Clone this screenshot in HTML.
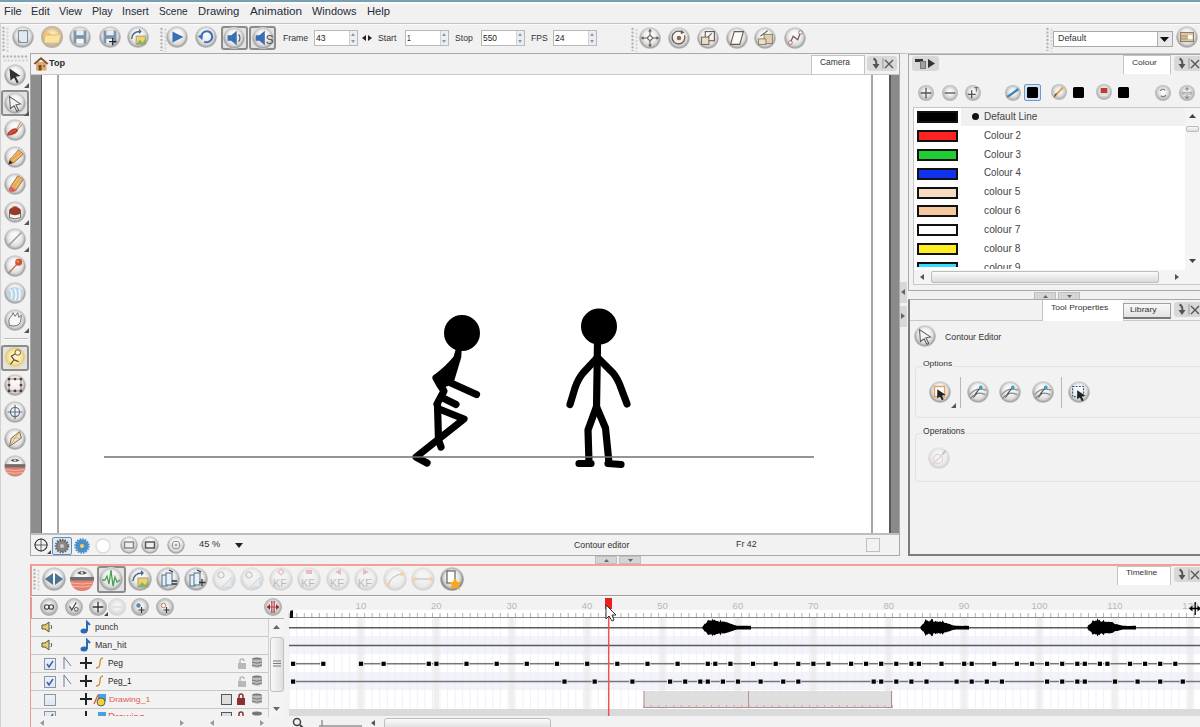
<!DOCTYPE html>
<html><head><meta charset="utf-8">
<style>
*{box-sizing:border-box;margin:0;padding:0}
html,body{width:1200px;height:727px;overflow:hidden;background:#f1f1f1;font-family:"Liberation Sans",sans-serif;color:#333}
.a{position:absolute}
svg.a{overflow:visible}
.t{position:absolute;white-space:nowrap;font-size:11px;line-height:13px}
</style></head><body>
<div class="a" style="left:0px;top:0px;width:1200px;height:2px;background:#7a9fb0;"></div>
<div class="a" style="left:0px;top:2px;width:1200px;height:2px;background:#f8fafb;"></div>
<div class="t" style="left:4.12px;top:6.29px;font-size:10.83px;line-height:10.83px;color:#2a2a33;font-weight:normal;transform:scaleX(1.016);transform-origin:0 0;">File</div>
<div class="t" style="left:30.73px;top:6.29px;font-size:10.83px;line-height:10.83px;color:#2a2a33;font-weight:normal;transform:scaleX(1.002);transform-origin:0 0;">Edit</div>
<div class="t" style="left:59.39px;top:6.29px;font-size:10.83px;line-height:10.83px;color:#2a2a33;font-weight:normal;transform:scaleX(0.992);transform-origin:0 0;">View</div>
<div class="t" style="left:91.95px;top:6.29px;font-size:10.83px;line-height:10.83px;color:#2a2a33;font-weight:normal;transform:scaleX(0.982);transform-origin:0 0;">Play</div>
<div class="t" style="left:121.84px;top:5.89px;font-size:11.30px;line-height:11.30px;color:#2a2a33;font-weight:normal;transform:scaleX(0.947);transform-origin:0 0;">Insert</div>
<div class="t" style="left:159.49px;top:6.03px;font-size:11.14px;line-height:11.14px;color:#2a2a33;font-weight:normal;transform:scaleX(0.907);transform-origin:0 0;">Scene</div>
<div class="t" style="left:197.80px;top:6.29px;font-size:10.83px;line-height:10.83px;color:#2a2a33;font-weight:normal;transform:scaleX(1.041);transform-origin:0 0;">Drawing</div>
<div class="t" style="left:249.50px;top:6.29px;font-size:10.83px;line-height:10.83px;color:#2a2a33;font-weight:normal;transform:scaleX(1.081);transform-origin:0 0;">Animation</div>
<div class="t" style="left:311.90px;top:6.29px;font-size:10.83px;line-height:10.83px;color:#2a2a33;font-weight:normal;transform:scaleX(1.013);transform-origin:0 0;">Windows</div>
<div class="t" style="left:366.50px;top:6.29px;font-size:10.83px;line-height:10.83px;color:#2a2a33;font-weight:normal;transform:scaleX(1.037);transform-origin:0 0;">Help</div>
<div class="a" style="left:0px;top:23px;width:1200px;height:1px;background:#c4c4c4;"></div>
<div class="a" style="left:0px;top:24px;width:1200px;height:1px;background:#fbfbfb;"></div>
<div class="a" style="left:30px;top:53px;width:1170px;height:1px;background:#c6c6c6;"></div>
<div class="a" style="left:0px;top:22px;width:1px;height:705px;background:#d2d2d2;"></div>
<div class="a" style="left:2px;top:26px;width:3px;height:25px;background-image:radial-gradient(circle closest-side,#a8a8a8 0,#b8b8b8 60%,transparent 100%);background-size:3px 3.7px"></div>
<div class="a" style="left:6px;top:27px;width:3px;height:25px;background-image:radial-gradient(circle closest-side,#cfcfcf 0,#d8d8d8 60%,transparent 100%);background-size:3px 3.7px"></div>
<div class="a" style="left:2px;top:55px;width:26px;height:3px;background-image:radial-gradient(circle closest-side,#a8a8a8 0,#b8b8b8 60%,transparent 100%);background-size:3.7px 3px"></div>
<div class="a" style="left:3px;top:59px;width:26px;height:3px;background-image:radial-gradient(circle closest-side,#cfcfcf 0,#d8d8d8 60%,transparent 100%);background-size:3.7px 3px"></div>
<div class="a" style="left:12px;top:26px;width:22px;height:22px;border-radius:50%;background:radial-gradient(55% 45% at 50% 30%,rgba(255,255,255,.9) 0%,rgba(255,255,255,0) 100%),radial-gradient(circle closest-side at 50% 50%,#efefef 0%,#e4e4e4 55%,#cfcfcf 72%,#a9a9a9 86%,#a6a6a6 90%,#c2c2c2 96%,#dcdcdc 100%);"><svg width="22" height="22" viewBox="-12 -12 24 24" style="position:absolute;left:0;top:0"><rect x="-5" y="-7" width="10" height="13" rx="1" fill="#dfeaf2" stroke="#7f8c96" stroke-width="1.2"/><path d="M-5 3 L-2 6" stroke="#7f8c96" stroke-width="1"/></svg></div>
<div class="a" style="left:41px;top:26px;width:22px;height:22px;border-radius:50%;background:radial-gradient(circle closest-side at 50% 45%,#fff3d8 0%,#f5deb0 50%,#d9c08e 80%,#bdb3a0 100%);"><svg width="22" height="22" viewBox="-12 -12 24 24" style="position:absolute;left:0;top:0"><path d="M-8 -5 L-3 -5 L-1 -3 L7 -3 L8 6 L-8 6 Z" fill="#f2c36b"/><path d="M-7 -1 L9 -2 L7 6 L-8 6 Z" fill="#fbe2a0"/></svg></div>
<div class="a" style="left:69px;top:26px;width:22px;height:22px;border-radius:50%;background:radial-gradient(55% 45% at 50% 30%,rgba(255,255,255,.9) 0%,rgba(255,255,255,0) 100%),radial-gradient(circle closest-side at 50% 50%,#efefef 0%,#e4e4e4 55%,#cfcfcf 72%,#a9a9a9 86%,#a6a6a6 90%,#c2c2c2 96%,#dcdcdc 100%);"><svg width="22" height="22" viewBox="-12 -12 24 24" style="position:absolute;left:0;top:0"><rect x="-7" y="-7" width="14" height="14" rx="1.5" fill="#7b95ad"/><rect x="-4" y="-7" width="8" height="5" fill="#e8eef3"/><rect x="-4" y="2" width="8" height="5" fill="#f5f7f9"/></svg></div>
<div class="a" style="left:99px;top:26px;width:22px;height:22px;border-radius:50%;background:radial-gradient(55% 45% at 50% 30%,rgba(255,255,255,.9) 0%,rgba(255,255,255,0) 100%),radial-gradient(circle closest-side at 50% 50%,#efefef 0%,#e4e4e4 55%,#cfcfcf 72%,#a9a9a9 86%,#a6a6a6 90%,#c2c2c2 96%,#dcdcdc 100%);"><svg width="22" height="22" viewBox="-12 -12 24 24" style="position:absolute;left:0;top:0"><rect x="-7" y="-7" width="14" height="14" rx="1.5" fill="#7b95ad"/><rect x="-4" y="-7" width="8" height="5" fill="#e8eef3"/><rect x="-4" y="2" width="8" height="5" fill="#f5f7f9"/><path d="M3 1 V9 M-1 5 H7" stroke="#222" stroke-width="1.4"/></svg></div>
<div class="a" style="left:127px;top:26px;width:22px;height:22px;border-radius:50%;background:radial-gradient(55% 45% at 50% 30%,rgba(255,255,255,.9) 0%,rgba(255,255,255,0) 100%),radial-gradient(circle closest-side at 50% 50%,#efefef 0%,#e4e4e4 55%,#cfcfcf 72%,#a9a9a9 86%,#a6a6a6 90%,#c2c2c2 96%,#dcdcdc 100%);"><svg width="22" height="22" viewBox="-12 -12 24 24" style="position:absolute;left:0;top:0"><rect x="-2" y="-1" width="10" height="9" fill="#f2d36b" stroke="#aa9a70" stroke-width="1"/><path d="M-2 8 L2 3 L5 6 L8 2 V8 Z" fill="#8bb26b"/><path d="M-7 2 Q-6 -6 2 -6" stroke="#4a6c8c" stroke-width="1.6" fill="none"/><path d="M1 -9 L4 -6 L1 -3Z" fill="#4a6c8c"/></svg></div>
<div class="a" style="left:160px;top:27px;width:3px;height:24px;background-image:radial-gradient(circle closest-side,#a8a8a8 0,#b8b8b8 60%,transparent 100%);background-size:3px 3.7px"></div>
<div class="a" style="left:164px;top:28px;width:3px;height:24px;background-image:radial-gradient(circle closest-side,#cfcfcf 0,#d8d8d8 60%,transparent 100%);background-size:3px 3.7px"></div>
<div class="a" style="left:166px;top:26px;width:22px;height:22px;border-radius:50%;background:radial-gradient(55% 45% at 50% 30%,rgba(255,255,255,.9) 0%,rgba(255,255,255,0) 100%),radial-gradient(circle closest-side at 50% 50%,#efefef 0%,#e4e4e4 55%,#cfcfcf 72%,#a9a9a9 86%,#a6a6a6 90%,#c2c2c2 96%,#dcdcdc 100%);"><svg width="22" height="22" viewBox="-12 -12 24 24" style="position:absolute;left:0;top:0"><path d="M-5 -6 L7 0 L-5 6 Z" fill="#3b6fb5"/></svg></div>
<div class="a" style="left:195px;top:26px;width:22px;height:22px;border-radius:50%;background:radial-gradient(55% 45% at 50% 30%,rgba(255,255,255,.9) 0%,rgba(255,255,255,0) 100%),radial-gradient(circle closest-side at 50% 50%,#efefef 0%,#e4e4e4 55%,#cfcfcf 72%,#a9a9a9 86%,#a6a6a6 90%,#c2c2c2 96%,#dcdcdc 100%);"><svg width="22" height="22" viewBox="-12 -12 24 24" style="position:absolute;left:0;top:0"><path d="M-5 -2 A6 6 0 1 1 -2 5" stroke="#3b6fb5" stroke-width="2.2" fill="none"/><path d="M-8 -4 L-2 -4 L-5 2Z" fill="#3b6fb5" transform="rotate(-20)"/></svg></div>
<div class="a" style="left:221px;top:26px;width:27px;height:24px;border:2px solid #8c8c8c;border-radius:3px;background:#e2e2e2"></div>
<div class="a" style="left:249px;top:26px;width:27px;height:24px;border:2px solid #8c8c8c;border-radius:3px;background:#e2e2e2"></div>
<div class="a" style="left:223px;top:27px;width:22px;height:22px;border-radius:50%;background:radial-gradient(55% 45% at 50% 30%,rgba(255,255,255,.9) 0%,rgba(255,255,255,0) 100%),radial-gradient(circle closest-side at 50% 50%,#efefef 0%,#e4e4e4 55%,#cfcfcf 72%,#a9a9a9 86%,#a6a6a6 90%,#c2c2c2 96%,#dcdcdc 100%);"><svg width="22" height="22" viewBox="-12 -12 24 24" style="position:absolute;left:0;top:0"><path d="M-7 -3 H-3 L3 -8 V8 L-3 3 H-7 Z" fill="#3b6fb5"/><path d="M5 -4 Q8 0 5 4" stroke="#555" stroke-width="1.3" fill="none"/></svg></div>
<div class="a" style="left:252px;top:27px;width:22px;height:22px;border-radius:50%;background:radial-gradient(55% 45% at 50% 30%,rgba(255,255,255,.9) 0%,rgba(255,255,255,0) 100%),radial-gradient(circle closest-side at 50% 50%,#efefef 0%,#e4e4e4 55%,#cfcfcf 72%,#a9a9a9 86%,#a6a6a6 90%,#c2c2c2 96%,#dcdcdc 100%);"><svg width="22" height="22" viewBox="-12 -12 24 24" style="position:absolute;left:0;top:0"><path d="M-8 -3 H-4 L2 -8 V8 L-4 3 H-8 Z" fill="#3b6fb5"/><text x="3" y="6" font-size="13" fill="#555" font-family="Liberation Sans">S</text></svg></div>
<div class="t" style="left:282.60px;top:33.53px;font-size:8.55px;line-height:8.55px;color:#333;font-weight:normal;transform:scaleX(1.021);transform-origin:0 0;">Frame</div>
<div class="a" style="left:314px;top:30px;width:44px;height:16px;background:#fff;border:1px solid #b9b9b9"></div>
<div class="t" style="left:316.13px;top:33.71px;font-size:8.57px;line-height:8.57px;color:#222;font-weight:normal;transform:scaleX(1.011);transform-origin:0 0;">43</div>
<div class="a" style="left:349px;top:31px;width:8px;height:14px;background:#eceef2;border-left:1px solid #d0d0d0"></div>
<svg class="a" style="left:349px;top:31px" width="8" height="14"><path d="M2 5 L4 2 L6 5Z M2 9 L4 12 L6 9Z" fill="#8a9ab0"/></svg>
<svg class="a" style="left:362px;top:34px;" width="10" height="8" viewBox="0 0 10 8"><path d="M0 4 L4 1 V7Z M10 4 L6 1 V7Z" fill="#222"/></svg>
<div class="t" style="left:377.86px;top:33.64px;font-size:8.43px;line-height:8.43px;color:#333;font-weight:normal;transform:scaleX(1.036);transform-origin:0 0;">Start</div>
<div class="a" style="left:405px;top:30px;width:44px;height:16px;background:#fff;border:1px solid #b9b9b9"></div>
<div class="t" style="left:406.76px;top:33.61px;font-size:8.70px;line-height:8.70px;color:#222;font-weight:normal;transform:scaleX(0.776);transform-origin:0 0;">1</div>
<div class="a" style="left:440px;top:31px;width:8px;height:14px;background:#eceef2;border-left:1px solid #d0d0d0"></div>
<svg class="a" style="left:440px;top:31px" width="8" height="14"><path d="M2 5 L4 2 L6 5Z M2 9 L4 12 L6 9Z" fill="#8a9ab0"/></svg>
<div class="t" style="left:454.87px;top:33.64px;font-size:8.43px;line-height:8.43px;color:#333;font-weight:normal;transform:scaleX(1.030);transform-origin:0 0;">Stop</div>
<div class="a" style="left:481px;top:30px;width:44px;height:16px;background:#fff;border:1px solid #b9b9b9"></div>
<div class="t" style="left:482.96px;top:33.71px;font-size:8.57px;line-height:8.57px;color:#222;font-weight:normal;transform:scaleX(0.983);transform-origin:0 0;">550</div>
<div class="a" style="left:516px;top:31px;width:8px;height:14px;background:#eceef2;border-left:1px solid #d0d0d0"></div>
<svg class="a" style="left:516px;top:31px" width="8" height="14"><path d="M2 5 L4 2 L6 5Z M2 9 L4 12 L6 9Z" fill="#8a9ab0"/></svg>
<div class="t" style="left:530.61px;top:33.64px;font-size:8.43px;line-height:8.43px;color:#333;font-weight:normal;transform:scaleX(1.023);transform-origin:0 0;">FPS</div>
<div class="a" style="left:553px;top:30px;width:44px;height:16px;background:#fff;border:1px solid #b9b9b9"></div>
<div class="t" style="left:554.87px;top:33.71px;font-size:8.57px;line-height:8.57px;color:#222;font-weight:normal;transform:scaleX(1.010);transform-origin:0 0;">24</div>
<div class="a" style="left:588px;top:31px;width:8px;height:14px;background:#eceef2;border-left:1px solid #d0d0d0"></div>
<svg class="a" style="left:588px;top:31px" width="8" height="14"><path d="M2 5 L4 2 L6 5Z M2 9 L4 12 L6 9Z" fill="#8a9ab0"/></svg>
<div class="a" style="left:631px;top:27px;width:3px;height:24px;background-image:radial-gradient(circle closest-side,#a8a8a8 0,#b8b8b8 60%,transparent 100%);background-size:3px 3.7px"></div>
<div class="a" style="left:635px;top:28px;width:3px;height:24px;background-image:radial-gradient(circle closest-side,#cfcfcf 0,#d8d8d8 60%,transparent 100%);background-size:3px 3.7px"></div>
<div class="a" style="left:639px;top:27px;width:22px;height:22px;border-radius:50%;background:radial-gradient(55% 45% at 50% 30%,rgba(255,255,255,.9) 0%,rgba(255,255,255,0) 100%),radial-gradient(circle closest-side at 50% 50%,#efefef 0%,#e4e4e4 55%,#cfcfcf 72%,#a9a9a9 86%,#a6a6a6 90%,#c2c2c2 96%,#dcdcdc 100%);"><svg width="22" height="22" viewBox="-12 -12 24 24" style="position:absolute;left:0;top:0"><path d="M0 -9 V9 M-9 0 H9" stroke="#6a5a4a" stroke-width="1.2"/><circle r="2.5" fill="#fff" stroke="#6a5a4a" stroke-width="1.2"/><path d="M0 -10 L-2 -7 H2Z M0 10 L-2 7 H2Z M-10 0 L-7 -2 V2Z M10 0 L7 -2 V2Z" fill="#6a5a4a"/></svg></div>
<div class="a" style="left:668px;top:27px;width:22px;height:22px;border-radius:50%;background:radial-gradient(55% 45% at 50% 30%,rgba(255,255,255,.9) 0%,rgba(255,255,255,0) 100%),radial-gradient(circle closest-side at 50% 50%,#efefef 0%,#e4e4e4 55%,#cfcfcf 72%,#a9a9a9 86%,#a6a6a6 90%,#c2c2c2 96%,#dcdcdc 100%);"><svg width="22" height="22" viewBox="-12 -12 24 24" style="position:absolute;left:0;top:0"><path d="M6 -3 A7 7 0 1 1 2 -7" stroke="#6a5a4a" stroke-width="1.4" fill="none"/><circle r="2.5" fill="#8a6a50"/><path d="M2 -9 L6 -6 L2 -4Z" fill="#6a5a4a"/></svg></div>
<div class="a" style="left:697px;top:27px;width:22px;height:22px;border-radius:50%;background:radial-gradient(55% 45% at 50% 30%,rgba(255,255,255,.9) 0%,rgba(255,255,255,0) 100%),radial-gradient(circle closest-side at 50% 50%,#efefef 0%,#e4e4e4 55%,#cfcfcf 72%,#a9a9a9 86%,#a6a6a6 90%,#c2c2c2 96%,#dcdcdc 100%);"><svg width="22" height="22" viewBox="-12 -12 24 24" style="position:absolute;left:0;top:0"><rect x="-3" y="-7" width="10" height="10" fill="none" stroke="#6a5a4a" stroke-width="1.2"/><rect x="-7" y="-1" width="8" height="8" fill="#e8dccb" stroke="#6a5a4a" stroke-width="1"/><path d="M0 -1 L4 -5" stroke="#6a5a4a" stroke-width="1.2"/></svg></div>
<div class="a" style="left:726px;top:27px;width:22px;height:22px;border-radius:50%;background:radial-gradient(55% 45% at 50% 30%,rgba(255,255,255,.9) 0%,rgba(255,255,255,0) 100%),radial-gradient(circle closest-side at 50% 50%,#efefef 0%,#e4e4e4 55%,#cfcfcf 72%,#a9a9a9 86%,#a6a6a6 90%,#c2c2c2 96%,#dcdcdc 100%);"><svg width="22" height="22" viewBox="-12 -12 24 24" style="position:absolute;left:0;top:0"><path d="M-3 -7 L7 -7 L3 7 L-7 7Z" fill="#fafafa" stroke="#6a5a4a" stroke-width="1.2"/></svg></div>
<div class="a" style="left:754px;top:27px;width:22px;height:22px;border-radius:50%;background:radial-gradient(55% 45% at 50% 30%,rgba(255,255,255,.9) 0%,rgba(255,255,255,0) 100%),radial-gradient(circle closest-side at 50% 50%,#efefef 0%,#e4e4e4 55%,#cfcfcf 72%,#a9a9a9 86%,#a6a6a6 90%,#c2c2c2 96%,#dcdcdc 100%);"><svg width="22" height="22" viewBox="-12 -12 24 24" style="position:absolute;left:0;top:0"><rect x="-1" y="-4" width="9" height="10" fill="#e0d0b0" stroke="#8a7a60" stroke-width="1"/><rect x="-7" y="1" width="8" height="6" fill="#ece0c8" stroke="#8a7a60" stroke-width="1"/><path d="M-5 -2 L3 -8" stroke="#6a5a4a" stroke-width="1.2"/></svg></div>
<div class="a" style="left:784px;top:27px;width:22px;height:22px;border-radius:50%;background:radial-gradient(55% 45% at 50% 30%,rgba(255,255,255,.9) 0%,rgba(255,255,255,0) 100%),radial-gradient(circle closest-side at 50% 50%,#efefef 0%,#e4e4e4 55%,#cfcfcf 72%,#a9a9a9 86%,#a6a6a6 90%,#c2c2c2 96%,#dcdcdc 100%);"><svg width="22" height="22" viewBox="-12 -12 24 24" style="position:absolute;left:0;top:0"><path d="M-5 5 L-2 -2 L3 2 L6 -6" stroke="#6a5a4a" stroke-width="1.3" fill="none"/><circle cx="-5" cy="5" r="2" fill="#fff" stroke="#b06060" stroke-width="1"/><circle cx="6" cy="-6" r="2" fill="#fff" stroke="#b06060" stroke-width="1"/></svg></div>
<div class="a" style="left:1046px;top:27px;width:3px;height:24px;background-image:radial-gradient(circle closest-side,#a8a8a8 0,#b8b8b8 60%,transparent 100%);background-size:3px 3.7px"></div>
<div class="a" style="left:1050px;top:28px;width:3px;height:24px;background-image:radial-gradient(circle closest-side,#cfcfcf 0,#d8d8d8 60%,transparent 100%);background-size:3px 3.7px"></div>
<div class="a" style="left:1053px;top:31px;width:120px;height:16px;background:#fff;border:1px solid #a8a8a8"></div>
<div class="t" style="left:1058.29px;top:34.73px;font-size:8.19px;line-height:8.19px;color:#333;font-weight:normal;transform:scaleX(1.086);transform-origin:0 0;">Default</div>
<div class="a" style="left:1157px;top:32px;width:15px;height:14px;background:#e9e9e9;border-left:1px solid #b0b0b0"></div>
<svg class="a" style="left:1160px;top:37px;" width="9" height="5" viewBox="0 0 9 5"><path d="M0 0 H9 L4.5 5Z" fill="#111"/></svg>
<div class="a" style="left:1176px;top:26px;width:22px;height:22px;border-radius:50%;background:radial-gradient(55% 45% at 50% 30%,rgba(255,255,255,.9) 0%,rgba(255,255,255,0) 100%),radial-gradient(circle closest-side at 50% 50%,#efefef 0%,#e4e4e4 55%,#cfcfcf 72%,#a9a9a9 86%,#a6a6a6 90%,#c2c2c2 96%,#dcdcdc 100%);"><svg width="22" height="22" viewBox="-12 -12 24 24" style="position:absolute;left:0;top:0"><rect x="-7" y="-5" width="14" height="10" fill="#d8c6a6" stroke="#8a7050" stroke-width="1"/><rect x="1" y="-2" width="5" height="4" fill="#fff"/><path d="M-7 -1 H1 M-7 2 H1" stroke="#8a7050" stroke-width=".8"/></svg></div>
<div class="a" style="left:1px;top:90px;width:28px;height:26px;border:2px solid #8c8c8c;border-radius:3px;background:#e2e2e2"></div>
<div class="a" style="left:4px;top:64px;width:22px;height:22px;border-radius:50%;background:radial-gradient(55% 45% at 50% 30%,rgba(255,255,255,.9) 0%,rgba(255,255,255,0) 100%),radial-gradient(circle closest-side at 50% 50%,#efefef 0%,#e4e4e4 55%,#cfcfcf 72%,#a9a9a9 86%,#a6a6a6 90%,#c2c2c2 96%,#dcdcdc 100%);"><svg width="22" height="22" viewBox="-12 -12 24 24" style="position:absolute;left:0;top:0"><path d="M-6 -7 L6 1 L1 2 L4 8 L2 9 L-1 3 L-5 6Z" fill="#333"/></svg></div>
<svg class="a" style="left:24px;top:83px;" width="5" height="5" viewBox="0 0 5 5"><path d="M5 0 V5 H0Z" fill="#555"/></svg>
<div class="a" style="left:4px;top:92px;width:22px;height:22px;border-radius:50%;background:radial-gradient(55% 45% at 50% 30%,rgba(255,255,255,.9) 0%,rgba(255,255,255,0) 100%),radial-gradient(circle closest-side at 50% 50%,#efefef 0%,#e4e4e4 55%,#cfcfcf 72%,#a9a9a9 86%,#a6a6a6 90%,#c2c2c2 96%,#dcdcdc 100%);"><svg width="22" height="22" viewBox="-12 -12 24 24" style="position:absolute;left:0;top:0"><path d="M-6 -7 L6 1 L1 2 L4 8 L2 9 L-1 3 L-5 6Z" fill="#f5f5f5" stroke="#555" stroke-width="1.1"/></svg></div>
<svg class="a" style="left:24px;top:111px;" width="5" height="5" viewBox="0 0 5 5"><path d="M5 0 V5 H0Z" fill="#555"/></svg>
<div class="a" style="left:4px;top:119px;width:22px;height:22px;border-radius:50%;background:radial-gradient(55% 45% at 50% 30%,rgba(255,255,255,.9) 0%,rgba(255,255,255,0) 100%),radial-gradient(circle closest-side at 50% 50%,#efefef 0%,#e4e4e4 55%,#cfcfcf 72%,#a9a9a9 86%,#a6a6a6 90%,#c2c2c2 96%,#dcdcdc 100%);"><svg width="22" height="22" viewBox="-12 -12 24 24" style="position:absolute;left:0;top:0"><path d="M-9 6 Q-7 1 -3 -1 Q1 -3 3 -1 Q4 2 0 4 Q-4 6 -9 6Z" fill="#b83a2a"/><path d="M-6 4 Q-2 1 1 0" stroke="#e07050" stroke-width="1.2" fill="none"/><path d="M2 -2 L6 -8 M3 -1 L8 -6" stroke="#b09070" stroke-width="1.1"/></svg></div>
<div class="a" style="left:4px;top:146px;width:22px;height:22px;border-radius:50%;background:radial-gradient(55% 45% at 50% 30%,rgba(255,255,255,.9) 0%,rgba(255,255,255,0) 100%),radial-gradient(circle closest-side at 50% 50%,#efefef 0%,#e4e4e4 55%,#cfcfcf 72%,#a9a9a9 86%,#a6a6a6 90%,#c2c2c2 96%,#dcdcdc 100%);"><svg width="22" height="22" viewBox="-12 -12 24 24" style="position:absolute;left:0;top:0"><path d="M-7 8 L-5 2 L4 -8 L9 -3 L-1 6Z" fill="#e8a850" stroke="#8a6030" stroke-width=".8"/><path d="M-4 1 L6 -7 M-2 4 L8 -4" stroke="#f5d090" stroke-width=".8"/><path d="M-7 8 L-5.5 3.5 L-2.5 6.5Z" fill="#222"/></svg></div>
<div class="a" style="left:4px;top:173px;width:22px;height:22px;border-radius:50%;background:radial-gradient(55% 45% at 50% 30%,rgba(255,255,255,.9) 0%,rgba(255,255,255,0) 100%),radial-gradient(circle closest-side at 50% 50%,#efefef 0%,#e4e4e4 55%,#cfcfcf 72%,#a9a9a9 86%,#a6a6a6 90%,#c2c2c2 96%,#dcdcdc 100%);"><svg width="22" height="22" viewBox="-12 -12 24 24" style="position:absolute;left:0;top:0"><path d="M-5 3 L3 -9 L9 -5 L1 7Z" fill="#e6aa58" stroke="#8a6030" stroke-width=".8"/><path d="M-2 1 L5 -8 M1 3 L7 -6" stroke="#f5d090" stroke-width=".8"/><path d="M-5 3 L1 7 Q-2 10 -6 8 Q-8 5 -5 3Z" fill="#d86060"/></svg></div>
<div class="a" style="left:4px;top:201px;width:22px;height:22px;border-radius:50%;background:radial-gradient(55% 45% at 50% 30%,rgba(255,255,255,.9) 0%,rgba(255,255,255,0) 100%),radial-gradient(circle closest-side at 50% 50%,#efefef 0%,#e4e4e4 55%,#cfcfcf 72%,#a9a9a9 86%,#a6a6a6 90%,#c2c2c2 96%,#dcdcdc 100%);"><svg width="22" height="22" viewBox="-12 -12 24 24" style="position:absolute;left:0;top:0"><path d="M-6 -2 H6 V6 Q0 9 -6 6Z" fill="#f4f4f4" stroke="#666" stroke-width="1"/><path d="M-6 -3 Q0 -9 6 -3 V2 Q0 5 -6 2Z" fill="#9a3a28"/><path d="M-3 -5 Q0 -7 3 -5" stroke="#d06a50" stroke-width="1.2" fill="none"/></svg></div>
<svg class="a" style="left:24px;top:220px;" width="5" height="5" viewBox="0 0 5 5"><path d="M5 0 V5 H0Z" fill="#555"/></svg>
<div class="a" style="left:4px;top:228px;width:22px;height:22px;border-radius:50%;background:radial-gradient(55% 45% at 50% 30%,rgba(255,255,255,.9) 0%,rgba(255,255,255,0) 100%),radial-gradient(circle closest-side at 50% 50%,#efefef 0%,#e4e4e4 55%,#cfcfcf 72%,#a9a9a9 86%,#a6a6a6 90%,#c2c2c2 96%,#dcdcdc 100%);"><svg width="22" height="22" viewBox="-12 -12 24 24" style="position:absolute;left:0;top:0"><path d="M-7 7 L7 -7" stroke="#999" stroke-width="1.5"/></svg></div>
<svg class="a" style="left:24px;top:247px;" width="5" height="5" viewBox="0 0 5 5"><path d="M5 0 V5 H0Z" fill="#555"/></svg>
<div class="a" style="left:4px;top:255px;width:22px;height:22px;border-radius:50%;background:radial-gradient(55% 45% at 50% 30%,rgba(255,255,255,.9) 0%,rgba(255,255,255,0) 100%),radial-gradient(circle closest-side at 50% 50%,#efefef 0%,#e4e4e4 55%,#cfcfcf 72%,#a9a9a9 86%,#a6a6a6 90%,#c2c2c2 96%,#dcdcdc 100%);"><svg width="22" height="22" viewBox="-12 -12 24 24" style="position:absolute;left:0;top:0"><path d="M-7 8 L2 -2" stroke="#b08060" stroke-width="1.6"/><circle cx="4" cy="-4" r="3.8" fill="#d8502e"/><circle cx="3" cy="-5" r="1.3" fill="#f09070"/></svg></div>
<div class="a" style="left:4px;top:282px;width:22px;height:22px;border-radius:50%;background:radial-gradient(55% 45% at 50% 30%,rgba(255,255,255,.9) 0%,rgba(255,255,255,0) 100%),radial-gradient(circle closest-side at 50% 50%,#efefef 0%,#e4e4e4 55%,#cfcfcf 72%,#a9a9a9 86%,#a6a6a6 90%,#c2c2c2 96%,#dcdcdc 100%);"><svg width="22" height="22" viewBox="-12 -12 24 24" style="position:absolute;left:0;top:0"><path d="M-9 -3 Q-3 -8 3 -6 L9 -2 Q6 4 8 8 L-2 9 Q-8 6 -9 -3Z" fill="#bcd6e8"/><path d="M-6 -4 Q-2 -2 -4 6 M-1 -5 Q3 -1 0 8 M4 -4 Q7 1 4 8" stroke="#f4f8fb" stroke-width="1.6" fill="none"/></svg></div>
<div class="a" style="left:4px;top:309px;width:22px;height:22px;border-radius:50%;background:radial-gradient(55% 45% at 50% 30%,rgba(255,255,255,.9) 0%,rgba(255,255,255,0) 100%),radial-gradient(circle closest-side at 50% 50%,#efefef 0%,#e4e4e4 55%,#cfcfcf 72%,#a9a9a9 86%,#a6a6a6 90%,#c2c2c2 96%,#dcdcdc 100%);"><svg width="22" height="22" viewBox="-12 -12 24 24" style="position:absolute;left:0;top:0"><path d="M-6 6 Q-8 -2 -4 -4 L-2 -8 L0 -4 L3 -8 L4 -3 L7 -5 L6 2 Q4 8 -6 6Z" fill="#f8f8f8" stroke="#666" stroke-width="1"/></svg></div>
<svg class="a" style="left:24px;top:328px;" width="5" height="5" viewBox="0 0 5 5"><path d="M5 0 V5 H0Z" fill="#555"/></svg>
<div class="a" style="left:4px;top:338px;width:24px;height:1px;background:#c0c0c0;"></div>
<div class="a" style="left:4px;top:339px;width:24px;height:1px;background:#fafafa;"></div>
<div class="a" style="left:1px;top:345px;width:28px;height:26px;border:2px solid #8c8c8c;border-radius:3px;background:#e2e2e2"></div>
<div class="a" style="left:4px;top:347px;width:22px;height:22px;border-radius:50%;background:radial-gradient(circle closest-side at 50% 45%,#fffbe8 0%,#fbeeb0 50%,#f2dc88 78%,#d8c890 92%,#e6dcc0 100%);"><svg width="22" height="22" viewBox="-12 -12 24 24" style="position:absolute;left:0;top:0"><path d="M-5 7 L-1 2 L-4 -2 L1 -5 M-1 2 L4 4" stroke="#6a5030" stroke-width="1.3" fill="none"/><circle cx="3" cy="-6" r="3" fill="#fff5c0" stroke="#6a5030" stroke-width="1"/></svg></div>
<div class="a" style="left:4px;top:374px;width:22px;height:22px;border-radius:50%;background:radial-gradient(55% 45% at 50% 30%,rgba(255,255,255,.9) 0%,rgba(255,255,255,0) 100%),radial-gradient(circle closest-side at 50% 50%,#efefef 0%,#e4e4e4 55%,#cfcfcf 72%,#a9a9a9 86%,#a6a6a6 90%,#c2c2c2 96%,#dcdcdc 100%);"><svg width="22" height="22" viewBox="-12 -12 24 24" style="position:absolute;left:0;top:0"><rect x="-6.5" y="-6.5" width="13" height="13" fill="none" stroke="#8a6a5a" stroke-width=".8"/><g fill="#5a3a30"><circle cx="-6.5" cy="-6.5" r="1.5"/><circle cx="0" cy="-6.5" r="1.5"/><circle cx="6.5" cy="-6.5" r="1.5"/><circle cx="-6.5" cy="0" r="1.5"/><circle cx="6.5" cy="0" r="1.5"/><circle cx="-6.5" cy="6.5" r="1.5"/><circle cx="0" cy="6.5" r="1.5"/><circle cx="6.5" cy="6.5" r="1.5"/></g></svg></div>
<div class="a" style="left:4px;top:401px;width:22px;height:22px;border-radius:50%;background:radial-gradient(55% 45% at 50% 30%,rgba(255,255,255,.9) 0%,rgba(255,255,255,0) 100%),radial-gradient(circle closest-side at 50% 50%,#efefef 0%,#e4e4e4 55%,#cfcfcf 72%,#a9a9a9 86%,#a6a6a6 90%,#c2c2c2 96%,#dcdcdc 100%);"><svg width="22" height="22" viewBox="-12 -12 24 24" style="position:absolute;left:0;top:0"><circle r="5" fill="none" stroke="#5a6a80" stroke-width="1.2"/><path d="M0 -8 V8 M-8 0 H8" stroke="#5a6a80" stroke-width="1.2"/></svg></div>
<div class="a" style="left:4px;top:428px;width:22px;height:22px;border-radius:50%;background:radial-gradient(55% 45% at 50% 30%,rgba(255,255,255,.9) 0%,rgba(255,255,255,0) 100%),radial-gradient(circle closest-side at 50% 50%,#efefef 0%,#e4e4e4 55%,#cfcfcf 72%,#a9a9a9 86%,#a6a6a6 90%,#c2c2c2 96%,#dcdcdc 100%);"><svg width="22" height="22" viewBox="-12 -12 24 24" style="position:absolute;left:0;top:0"><path d="M5 -8 L7 -1 L-6 8 L-4 -1Z" fill="#f2e2c0" stroke="#7a6040" stroke-width="1"/><path d="M5 -8 L-6 8 M-4 -1 L7 -1" stroke="#b09a70" stroke-width=".7"/></svg></div>
<div class="a" style="left:4px;top:455px;width:22px;height:22px;border-radius:50%;background:radial-gradient(55% 45% at 50% 30%,rgba(255,255,255,.9) 0%,rgba(255,255,255,0) 100%),radial-gradient(circle closest-side at 50% 50%,#efefef 0%,#e4e4e4 55%,#cfcfcf 72%,#a9a9a9 86%,#a6a6a6 90%,#c2c2c2 96%,#dcdcdc 100%);"><svg width="22" height="22" viewBox="-12 -12 24 24" style="position:absolute;left:0;top:0"><path d="M-11 -2 H11 L10.5 3 Q8 11 0 11 Q-8 11 -10.5 3Z" fill="#e58170"/><path d="M-11 -2 H11 L10.8 1.5 H-10.8Z" fill="#6e6e6e"/><path d="M-10 4 Q0 6 10 4 M-9 7 Q0 9 9 7" stroke="#f7b8a8" stroke-width="1" fill="none"/><path d="M-5 -6 Q0 -10 5 -6 Q0 -3 -5 -6Z" fill="#555"/><circle cx="0" cy="-6.2" r="1.3" fill="#ddd"/></svg></div>
<div class="a" style="left:30px;top:53px;width:870px;height:503px;border:1px solid #a9a9a9;background:#f2f2f2"></div>
<div class="a" style="left:31px;top:74px;width:868px;height:1px;background:#c8c8c8;"></div>
<div class="a" style="left:31px;top:75px;width:11px;height:458px;background:#8d8d8d;"></div>
<div class="a" style="left:42px;top:75px;width:848px;height:458px;background:#fff;"></div>
<div class="a" style="left:57px;top:75px;width:2px;height:458px;background:#a6a6a6;"></div>
<div class="a" style="left:871px;top:75px;width:2px;height:458px;background:#a6a6a6;"></div>
<div class="a" style="left:889px;top:75px;width:10px;height:458px;background:#8a8a8a;"></div>
<div class="a" style="left:889px;top:75px;width:1.5px;height:458px;background:#585858;"></div>
<div class="a" style="left:40.5px;top:75px;width:1.5px;height:458px;background:#585858;"></div>
<div class="a" style="left:31px;top:533px;width:868px;height:2px;background:#bdbdbd;"></div>
<svg class="a" style="left:33px;top:56px;" width="16" height="15" viewBox="0 0 16 15"><rect x="3" y="6" width="10.5" height="8.5" fill="#dcaa70"/><path d="M0.5 7.5 L8 1 L15.5 7.5 L14 8.5 L8 3.5 L2 8.5Z" fill="#7e5226"/><rect x="5.5" y="9" width="3" height="5.5" fill="#7a4a1e"/><rect x="10" y="9" width="2" height="2" fill="#a07040"/></svg>
<div class="t" style="left:49.21px;top:58.29px;font-size:9.42px;line-height:9.42px;color:#2a2a3a;font-weight:bold;transform:scaleX(0.975);transform-origin:0 0;">Top</div>
<div class="a" style="left:811px;top:55px;width:54px;height:19px;background:#fff;border:1.5px solid #c4c4c4;border-bottom:none"></div>
<div class="t" style="left:819.98px;top:57.94px;font-size:8.43px;line-height:8.43px;color:#333;font-weight:normal;transform:scaleX(1.004);transform-origin:0 0;">Camera</div>
<div class="a" style="left:867px;top:56px;width:30px;height:15px;background:#d8d8d8;border-radius:3px"></div>
<svg class="a" style="left:869px;top:57px;" width="26" height="13" viewBox="0 0 26 13"><path d="M4.5 1.5 Q8.5 3 7 10.5" stroke="#555" stroke-width="2" fill="none"/><path d="M3.5 7 L7 12 L10.5 7Z" fill="#555"/><path d="M14 1 V12" stroke="#999" stroke-width="1"/><path d="M16 3 L24 11 M24 3 L16 11" stroke="#555" stroke-width="1.3"/></svg>
<svg class="a" style="left:0;top:0" width="1200" height="727"><g stroke="#000" stroke-width="7.2" stroke-linecap="round" stroke-linejoin="round" fill="none">
<circle cx="462" cy="333" r="15.5" fill="#000" stroke-width="5"/>
<path d="M459 348 L456 358 Q448 368 436 377 L443 385 L451 382 L458.5 357 Z" fill="#000" stroke-width="5.5"/>
<path d="M436 378 Q440 386 444 391 L437 404"/>
<path d="M451 383 L476.5 394.5"/>
<path d="M441 397 L456 404.5"/>
<path d="M437.5 405 L438.5 440 L441 447"/>
<path d="M439 409 L464 419 L416 457 L427 463"/>
<circle cx="599" cy="326.5" r="15.5" fill="#000" stroke-width="5"/>
<path d="M597.5 343 L596.5 408"/>
<path d="M597 358 L583 373 Q578 379 575 388 L570 404.5"/>
<path d="M598 358 L613 373 Q618 379 621 388 L627 404"/>
<path d="M596 408 L588 430 L589 463 M579 463.5 L591 463.5"/>
<path d="M597 408 L605.5 428 L609 463 M608 463.5 L621 464.5"/>
</g>
<path d="M104 457 H814" stroke="#707070" stroke-width="1.4"/></svg>
<div class="a" style="left:32px;top:536px;width:18px;height:18px;border-radius:50%;background:#f2f2f2;"><svg width="18" height="18" viewBox="-12 -12 24 24" style="position:absolute;left:0;top:0"><circle r="8" fill="none" stroke="#333" stroke-width="1.4"/><path d="M0 -9 V9 M-9 0 H9" stroke="#333" stroke-width="1"/></svg></div>
<svg class="a" style="left:47px;top:550px;" width="4" height="4" viewBox="0 0 4 4"><path d="M4 0 V4 H0Z" fill="#444"/></svg>
<div class="a" style="left:52px;top:537px;width:20px;height:18px;border:1.5px solid #5a8fc0;border-radius:2px;background:#dfe8f0"></div>
<svg class="a" style="left:53px;top:537px;" width="18" height="18" viewBox="0 0 18 18"><circle cx="9" cy="9" r="6" fill="#888" stroke="#666" stroke-dasharray="1.5 1" stroke-width="2.5"/><circle cx="9" cy="9" r="2" fill="#ccc"/></svg>
<svg class="a" style="left:73px;top:537px;" width="18" height="18" viewBox="0 0 18 18"><circle cx="9" cy="9" r="6.5" fill="#4a90c8" stroke="#4a90c8" stroke-dasharray="1.5 1" stroke-width="2.5"/><circle cx="9" cy="9" r="2" fill="#f8d060"/></svg>
<svg class="a" style="left:94px;top:537px;" width="18" height="18" viewBox="0 0 18 18"><circle cx="9" cy="9" r="7" fill="#fff" stroke="#ddd" stroke-width="1.5"/></svg>
<div class="a" style="left:120px;top:536px;width:18px;height:18px;border-radius:50%;background:radial-gradient(55% 45% at 50% 30%,rgba(255,255,255,.9) 0%,rgba(255,255,255,0) 100%),radial-gradient(circle closest-side at 50% 50%,#efefef 0%,#e4e4e4 55%,#cfcfcf 72%,#a9a9a9 86%,#a6a6a6 90%,#c2c2c2 96%,#dcdcdc 100%);"><svg width="18" height="18" viewBox="-12 -12 24 24" style="position:absolute;left:0;top:0"><rect x="-7" y="-5" width="14" height="10" fill="#888" rx="1"/><rect x="-5" y="-3" width="10" height="6" fill="#eee"/></svg></div>
<div class="a" style="left:141px;top:536px;width:18px;height:18px;border-radius:50%;background:radial-gradient(55% 45% at 50% 30%,rgba(255,255,255,.9) 0%,rgba(255,255,255,0) 100%),radial-gradient(circle closest-side at 50% 50%,#efefef 0%,#e4e4e4 55%,#cfcfcf 72%,#a9a9a9 86%,#a6a6a6 90%,#c2c2c2 96%,#dcdcdc 100%);"><svg width="18" height="18" viewBox="-12 -12 24 24" style="position:absolute;left:0;top:0"><rect x="-7" y="-5" width="14" height="10" fill="#555" rx="1"/><rect x="-5" y="-3" width="10" height="6" fill="#eee"/></svg></div>
<div class="a" style="left:167px;top:536px;width:18px;height:18px;border-radius:50%;background:radial-gradient(55% 45% at 50% 30%,rgba(255,255,255,.9) 0%,rgba(255,255,255,0) 100%),radial-gradient(circle closest-side at 50% 50%,#efefef 0%,#e4e4e4 55%,#cfcfcf 72%,#a9a9a9 86%,#a6a6a6 90%,#c2c2c2 96%,#dcdcdc 100%);"><svg width="18" height="18" viewBox="-12 -12 24 24" style="position:absolute;left:0;top:0"><circle r="5" fill="none" stroke="#888" stroke-width="1.5"/><circle r="2" fill="#aaa"/></svg></div>
<div class="t" style="left:198.86px;top:540.41px;font-size:8.93px;line-height:8.93px;color:#333;font-weight:normal;transform:scaleX(1.042);transform-origin:0 0;">45 %</div>
<svg class="a" style="left:235px;top:543px;" width="8" height="5" viewBox="0 0 8 5"><path d="M0 0 H8 L4 5Z" fill="#222"/></svg>
<div class="t" style="left:573.86px;top:540.56px;font-size:8.75px;line-height:8.75px;color:#333;font-weight:normal;transform:scaleX(0.997);transform-origin:0 0;">Contour editor</div>
<div class="t" style="left:735.89px;top:540.39px;font-size:8.71px;line-height:8.71px;color:#333;font-weight:normal;transform:scaleX(1.018);transform-origin:0 0;">Fr 42</div>
<div class="a" style="left:866px;top:538px;width:14px;height:14px;border:1px solid #c0c0c0;background:#f2f2f2"></div>
<div class="a" style="left:595px;top:556px;width:22px;height:8px;background:#d5d5d5;border:1px solid #c0c0c0"></div>
<svg class="a" style="left:604px;top:559px;" width="5" height="3" viewBox="0 0 5 3"><path d="M0 3 L2.5 0 L5 3Z" fill="#666"/></svg>
<div class="a" style="left:619px;top:556px;width:22px;height:8px;background:#d5d5d5;border:1px solid #c0c0c0"></div>
<svg class="a" style="left:628px;top:559px;" width="5" height="3" viewBox="0 0 5 3"><path d="M0 0 H5 L2.5 3Z" fill="#666"/></svg>
<div class="a" style="left:900px;top:282px;width:7px;height:21px;background:#d8d8d8;"></div>
<svg class="a" style="left:901px;top:289px;" width="5" height="6" viewBox="0 0 5 6"><path d="M4 0 V6 L0 3Z" fill="#666"/></svg>
<div class="a" style="left:900px;top:306px;width:7px;height:21px;background:#d8d8d8;"></div>
<svg class="a" style="left:901px;top:313px;" width="5" height="6" viewBox="0 0 5 6"><path d="M0 0 V6 L4 3Z" fill="#666"/></svg>
<div class="a" style="left:908px;top:54px;width:292px;height:237px;border:1px solid #a9a9a9;border-right:none;background:#f2f2f2"></div>
<div class="a" style="left:912px;top:56px;width:27px;height:15px;background:#d8d8d8;border-radius:3px"></div>
<svg class="a" style="left:914px;top:57px;" width="23" height="13" viewBox="0 0 23 13"><rect x="1" y="2" width="8" height="3" fill="#333"/><rect x="6" y="4" width="6" height="8" fill="#777"/><path d="M7 6 H11 M7 8 H11 M7 10 H11" stroke="#ddd" stroke-width=".8"/><path d="M14 2 L21 6.5 L14 11Z" fill="#333"/></svg>
<div class="a" style="left:1123px;top:55px;width:48px;height:19px;background:#fff;border:1px solid #c4c4c4;border-bottom:none"></div>
<div class="t" style="left:1131.88px;top:58.81px;font-size:7.64px;line-height:7.64px;color:#333;font-weight:normal;transform:scaleX(1.109);transform-origin:0 0;">Colour</div>
<div class="a" style="left:1174px;top:56px;width:28px;height:15px;background:#d8d8d8;border-radius:3px"></div>
<svg class="a" style="left:1175px;top:57px;" width="26" height="13" viewBox="0 0 26 13"><path d="M4.5 1.5 Q8.5 3 7 10.5" stroke="#555" stroke-width="2" fill="none"/><path d="M3.5 7 L7 12 L10.5 7Z" fill="#555"/><path d="M14 1 V12" stroke="#999" stroke-width="1"/><path d="M16 3 L24 11 M24 3 L16 11" stroke="#555" stroke-width="1.3"/></svg>
<div class="a" style="left:918px;top:85px;width:16px;height:16px;border-radius:50%;background:radial-gradient(circle closest-side at 50% 45%,#ffffff 0%,#efefef 45%,#cfcfcf 80%,#b8b8b8 100%);"><svg width="16" height="16" viewBox="-12 -12 24 24" style="position:absolute;left:0;top:0"><path d="M0 -8 V8 M-8 0 H8" stroke="#555" stroke-width="2"/></svg></div>
<div class="a" style="left:942px;top:85px;width:16px;height:16px;border-radius:50%;background:radial-gradient(circle closest-side at 50% 45%,#ffffff 0%,#efefef 45%,#cfcfcf 80%,#b8b8b8 100%);"><svg width="16" height="16" viewBox="-12 -12 24 24" style="position:absolute;left:0;top:0"><path d="M-8 0 H8" stroke="#555" stroke-width="2"/></svg></div>
<div class="a" style="left:965px;top:85px;width:16px;height:16px;border-radius:50%;background:radial-gradient(circle closest-side at 50% 45%,#ffffff 0%,#efefef 45%,#cfcfcf 80%,#b8b8b8 100%);"><svg width="16" height="16" viewBox="-12 -12 24 24" style="position:absolute;left:0;top:0"><path d="M-2 -4 V8 M-8 2 H4" stroke="#555" stroke-width="2"/><path d="M2 -8 H8 M5 -8 V-2" stroke="#555" stroke-width="1.3"/></svg></div>
<div class="a" style="left:1005px;top:85px;width:16px;height:16px;border-radius:50%;background:radial-gradient(circle closest-side at 50% 45%,#ffffff 0%,#efefef 45%,#cfcfcf 80%,#b8b8b8 100%);"><svg width="16" height="16" viewBox="-12 -12 24 24" style="position:absolute;left:0;top:0"><path d="M-9 6 Q-2 2 8 -6" stroke="#3a8ac0" stroke-width="3.5" fill="none"/></svg></div>
<div class="a" style="left:1024px;top:84px;width:17px;height:17px;border:1.5px solid #6a9cc8;border-radius:2px;background:#d6e4f0"></div>
<div class="a" style="left:1027px;top:87px;width:11px;height:11px;background:#000;border-radius:1.5px"></div>
<div class="a" style="left:1051px;top:84px;width:16px;height:16px;border-radius:50%;background:radial-gradient(circle closest-side at 50% 45%,#ffffff 0%,#efefef 45%,#cfcfcf 80%,#b8b8b8 100%);"><svg width="16" height="16" viewBox="-12 -12 24 24" style="position:absolute;left:0;top:0"><path d="M-7 7 L6 -7" stroke="#e0a040" stroke-width="3"/><path d="M-7 7 L-4 2" stroke="#333" stroke-width="1.5"/></svg></div>
<div class="a" style="left:1073px;top:87px;width:11px;height:11px;background:#000;border-radius:1.5px"></div>
<div class="a" style="left:1096px;top:84px;width:16px;height:16px;border-radius:50%;background:radial-gradient(circle closest-side at 50% 45%,#ffffff 0%,#efefef 45%,#cfcfcf 80%,#b8b8b8 100%);"><svg width="16" height="16" viewBox="-12 -12 24 24" style="position:absolute;left:0;top:0"><rect x="-5" y="-6" width="10" height="8" fill="#c03a30"/><rect x="-5" y="2" width="10" height="4" fill="#e6e6e6"/></svg></div>
<div class="a" style="left:1118px;top:87px;width:11px;height:11px;background:#000;border-radius:1.5px"></div>
<div class="a" style="left:1155px;top:85px;width:16px;height:16px;border-radius:50%;background:radial-gradient(circle closest-side at 50% 45%,#ffffff 0%,#efefef 45%,#cfcfcf 80%,#b8b8b8 100%);"><svg width="16" height="16" viewBox="-12 -12 24 24" style="position:absolute;left:0;top:0"><path d="M-4 -3 A4 4 0 0 1 3 -4 M4 3 A4 4 0 0 1 -3 4" stroke="#777" stroke-width="1.8" fill="none"/></svg></div>
<div class="a" style="left:1179px;top:85px;width:16px;height:16px;border-radius:50%;background:radial-gradient(circle closest-side at 50% 45%,#ffffff 0%,#efefef 45%,#cfcfcf 80%,#b8b8b8 100%);"><svg width="16" height="16" viewBox="-12 -12 24 24" style="position:absolute;left:0;top:0"><path d="M-8 -1 H8 M-8 1.5 H8" stroke="#777" stroke-width="1"/><path d="M0 -8 V-3 M0 3 V8 M-3 -5 L0 -8 L3 -5 M-3 5 L0 8 L3 5" stroke="#666" stroke-width="1.3" fill="none"/></svg></div>
<div class="a" style="left:913px;top:107px;width:287px;height:178px;border:1px solid #c8c8c8;border-right:none;background:#fff;overflow:hidden"></div>
<div class="a" style="left:961px;top:108px;width:224px;height:18px;background:#f0f0f0;"></div>
<div class="a" style="left:917px;top:111px;width:41px;height:12px;background:#000;border:2px solid #111;"></div>
<div class="t" style="left:984.00px;top:110.79px;font-size:10.83px;line-height:10.83px;color:#444;font-weight:normal;transform:scaleX(0.923);transform-origin:0 0;">Default Line</div>
<div class="a" style="left:917px;top:130px;width:41px;height:12px;background:#ff2222;border:2px solid #111;"></div>
<div class="t" style="left:984.31px;top:129.69px;font-size:10.83px;line-height:10.83px;color:#444;font-weight:normal;transform:scaleX(0.906);transform-origin:0 0;">Colour 2</div>
<div class="a" style="left:917px;top:149px;width:41px;height:12px;background:#22cc33;border:2px solid #111;"></div>
<div class="t" style="left:984.31px;top:148.59px;font-size:10.83px;line-height:10.83px;color:#444;font-weight:normal;transform:scaleX(0.906);transform-origin:0 0;">Colour 3</div>
<div class="a" style="left:917px;top:168px;width:41px;height:12px;background:#1133ee;border:2px solid #111;"></div>
<div class="t" style="left:984.31px;top:167.49px;font-size:10.83px;line-height:10.83px;color:#444;font-weight:normal;transform:scaleX(0.901);transform-origin:0 0;">Colour 4</div>
<div class="a" style="left:917px;top:187px;width:41px;height:12px;background:#f7dcc4;border:2px solid #111;"></div>
<div class="t" style="left:984.39px;top:186.39px;font-size:10.83px;line-height:10.83px;color:#444;font-weight:normal;transform:scaleX(0.944);transform-origin:0 0;">colour 5</div>
<div class="a" style="left:917px;top:205px;width:41px;height:12px;background:#f5c8a0;border:2px solid #111;"></div>
<div class="t" style="left:984.39px;top:205.29px;font-size:10.83px;line-height:10.83px;color:#444;font-weight:normal;transform:scaleX(0.947);transform-origin:0 0;">colour 6</div>
<div class="a" style="left:917px;top:224px;width:41px;height:12px;background:#ffffff;border:2px solid #111;"></div>
<div class="t" style="left:984.39px;top:224.19px;font-size:10.83px;line-height:10.83px;color:#444;font-weight:normal;transform:scaleX(0.947);transform-origin:0 0;">colour 7</div>
<div class="a" style="left:917px;top:243px;width:41px;height:12px;background:#ffee22;border:2px solid #111;"></div>
<div class="t" style="left:984.39px;top:243.09px;font-size:10.83px;line-height:10.83px;color:#444;font-weight:normal;transform:scaleX(0.947);transform-origin:0 0;">colour 8</div>
<div class="a" style="left:917px;top:262px;width:41px;height:5px;background:#33ddff;border:2px solid #111;border-bottom:none;"></div>
<div class="a" style="left:975px;top:260px;width:80px;height:9px;overflow:hidden"><div class="a" style="left:-975px;top:-260px;width:1200px;height:300px">
<div class="t" style="left:984.39px;top:261.99px;font-size:10.83px;line-height:10.83px;color:#444;font-weight:normal;transform:scaleX(0.947);transform-origin:0 0;">colour 9</div>
</div></div>
<div class="a" style="left:972px;top:113px;width:7px;height:7px;border-radius:50%;background:#111"></div>
<div class="a" style="left:1185px;top:108px;width:15px;height:162px;background:#f4f4f4;"></div>
<svg class="a" style="left:1189px;top:114px;" width="7" height="4" viewBox="0 0 7 4"><path d="M0 4 L3.5 0 L7 4Z" fill="#444"/></svg>
<div class="a" style="left:1186px;top:126px;width:13px;height:6px;background:linear-gradient(#fafafa,#dcdcdc);border:1px solid #bbb;border-radius:2px"></div>
<svg class="a" style="left:1189px;top:259px;" width="7" height="4" viewBox="0 0 7 4"><path d="M0 0 H7 L3.5 4Z" fill="#444"/></svg>
<div class="a" style="left:914px;top:270px;width:286px;height:14px;background:#f4f4f4;"></div>
<svg class="a" style="left:920px;top:274px;" width="4" height="6" viewBox="0 0 4 6"><path d="M4 0 V6 L0 3Z" fill="#555"/></svg>
<div class="a" style="left:931px;top:271px;width:228px;height:12px;background:linear-gradient(#fbfbfb,#dadada);border:1px solid #bdbdbd;border-radius:2px"></div>
<svg class="a" style="left:1175px;top:274px;" width="4" height="6" viewBox="0 0 4 6"><path d="M0 0 V6 L4 3Z" fill="#555"/></svg>
<div class="a" style="left:1034px;top:292px;width:22px;height:8px;background:#d5d5d5;border:1px solid #c0c0c0"></div>
<svg class="a" style="left:1043px;top:295px;" width="5" height="3" viewBox="0 0 5 3"><path d="M0 3 L2.5 0 L5 3Z" fill="#666"/></svg>
<div class="a" style="left:1058px;top:292px;width:22px;height:8px;background:#d5d5d5;border:1px solid #c0c0c0"></div>
<svg class="a" style="left:1067px;top:295px;" width="5" height="3" viewBox="0 0 5 3"><path d="M0 0 H5 L2.5 3Z" fill="#666"/></svg>
<div class="a" style="left:908px;top:299px;width:292px;height:257px;border:2px solid #7c7c7c;border-right:none;border-top:1px solid #a9a9a9;background:#f2f2f2"></div>
<div class="a" style="left:910px;top:320px;width:290px;height:1px;background:#c8c8c8;"></div>
<div class="a" style="left:1042px;top:300px;width:81px;height:21px;background:#fff;border-left:1px solid #c4c4c4"></div>
<div class="t" style="left:1051.43px;top:304.45px;font-size:8.06px;line-height:8.06px;color:#333;font-weight:normal;transform:scaleX(1.067);transform-origin:0 0;">Tool Properties</div>
<div class="a" style="left:1123px;top:303px;width:48px;height:16px;background:linear-gradient(#f8f8f8,#e2e2e2);border:1px solid #a0a0a0;border-bottom:2px solid #777"></div>
<div class="t" style="left:1129.60px;top:305.79px;font-size:7.78px;line-height:7.78px;color:#333;font-weight:normal;transform:scaleX(1.126);transform-origin:0 0;">Library</div>
<div class="a" style="left:1174px;top:302px;width:28px;height:15px;background:#d8d8d8;border-radius:3px"></div>
<svg class="a" style="left:1175px;top:303px;" width="26" height="13" viewBox="0 0 26 13"><path d="M4.5 1.5 Q8.5 3 7 10.5" stroke="#555" stroke-width="2" fill="none"/><path d="M3.5 7 L7 12 L10.5 7Z" fill="#555"/><path d="M14 1 V12" stroke="#999" stroke-width="1"/><path d="M16 3 L24 11 M24 3 L16 11" stroke="#555" stroke-width="1.3"/></svg>
<div class="a" style="left:914px;top:325px;width:22px;height:22px;border-radius:50%;background:radial-gradient(55% 45% at 50% 30%,rgba(255,255,255,.9) 0%,rgba(255,255,255,0) 100%),radial-gradient(circle closest-side at 50% 50%,#efefef 0%,#e4e4e4 55%,#cfcfcf 72%,#a9a9a9 86%,#a6a6a6 90%,#c2c2c2 96%,#dcdcdc 100%);"><svg width="22" height="22" viewBox="-12 -12 24 24" style="position:absolute;left:0;top:0"><path d="M-6 -7 L6 1 L1 2 L4 8 L2 9 L-1 3 L-5 6Z" fill="#f5f5f5" stroke="#555" stroke-width="1.1"/></svg></div>
<div class="t" style="left:945.26px;top:332.64px;font-size:8.54px;line-height:8.54px;color:#333;font-weight:normal;transform:scaleX(1.022);transform-origin:0 0;">Contour Editor</div>
<div class="a" style="left:915px;top:366px;width:290px;height:52px;border:1px solid #e2e2e6;border-radius:4px"></div>
<div class="t" style="left:922.78px;top:359.77px;font-size:7.92px;line-height:7.92px;color:#333;font-weight:normal;transform:scaleX(1.071);transform-origin:0 0;background:#f2f2f2;padding:0 1px 2px 0">Options</div>
<div class="a" style="left:929px;top:381px;width:22px;height:22px;border-radius:50%;background:radial-gradient(55% 45% at 50% 30%,rgba(255,255,255,.9) 0%,rgba(255,255,255,0) 100%),radial-gradient(circle closest-side at 50% 50%,#efefef 0%,#e4e4e4 55%,#cfcfcf 72%,#a9a9a9 86%,#a6a6a6 90%,#c2c2c2 96%,#dcdcdc 100%);"><svg width="22" height="22" viewBox="-12 -12 24 24" style="position:absolute;left:0;top:0"><rect x="-6" y="-6" width="11" height="11" fill="#fff" stroke="#e8a050" stroke-width="1.5"/><path d="M-3 -3 L6 3 L2 4 L4 8 L2 9 L0 5 L-3 7Z" fill="#222"/></svg></div>
<svg class="a" style="left:951px;top:403px;" width="5" height="5" viewBox="0 0 5 5"><path d="M5 0 V5 H0Z" fill="#555"/></svg>
<div class="a" style="left:960px;top:377px;width:1px;height:31px;background:#b8b8b8;"></div>
<div class="a" style="left:967px;top:381px;width:22px;height:22px;border-radius:50%;background:radial-gradient(55% 45% at 50% 30%,rgba(255,255,255,.9) 0%,rgba(255,255,255,0) 100%),radial-gradient(circle closest-side at 50% 50%,#efefef 0%,#e4e4e4 55%,#cfcfcf 72%,#a9a9a9 86%,#a6a6a6 90%,#c2c2c2 96%,#dcdcdc 100%);"><svg width="22" height="22" viewBox="-12 -12 24 24" style="position:absolute;left:0;top:0"><path d="M-9 3 Q-2 -6 9 -2 M-8 7 Q-1 -2 8 3" stroke="#888" stroke-width="1.3" fill="none"/><path d="M-3 2 L3 -5 M-5 6 L-1 1" stroke="#555" stroke-width="1.2"/><circle cx="3" cy="-5" r="2" fill="#3aa0d0"/></svg></div>
<div class="a" style="left:999px;top:381px;width:22px;height:22px;border-radius:50%;background:radial-gradient(55% 45% at 50% 30%,rgba(255,255,255,.9) 0%,rgba(255,255,255,0) 100%),radial-gradient(circle closest-side at 50% 50%,#efefef 0%,#e4e4e4 55%,#cfcfcf 72%,#a9a9a9 86%,#a6a6a6 90%,#c2c2c2 96%,#dcdcdc 100%);"><svg width="22" height="22" viewBox="-12 -12 24 24" style="position:absolute;left:0;top:0"><path d="M-9 3 Q-2 -6 9 -2 M-8 7 Q-1 -2 8 3" stroke="#888" stroke-width="1.3" fill="none"/><path d="M-3 2 L3 -5 M-5 6 L-1 1" stroke="#555" stroke-width="1.2"/><circle cx="3" cy="-5" r="2" fill="#3aa0d0"/></svg></div>
<div class="a" style="left:1032px;top:381px;width:22px;height:22px;border-radius:50%;background:radial-gradient(55% 45% at 50% 30%,rgba(255,255,255,.9) 0%,rgba(255,255,255,0) 100%),radial-gradient(circle closest-side at 50% 50%,#efefef 0%,#e4e4e4 55%,#cfcfcf 72%,#a9a9a9 86%,#a6a6a6 90%,#c2c2c2 96%,#dcdcdc 100%);"><svg width="22" height="22" viewBox="-12 -12 24 24" style="position:absolute;left:0;top:0"><path d="M-9 3 Q-2 -6 9 -2 M-8 7 Q-1 -2 8 3" stroke="#888" stroke-width="1.3" fill="none"/><path d="M-3 2 L3 -5 M-5 6 L-1 1" stroke="#555" stroke-width="1.2"/><circle cx="3" cy="-5" r="2" fill="#3aa0d0"/></svg></div>
<div class="a" style="left:1061px;top:377px;width:1px;height:31px;background:#b8b8b8;"></div>
<div class="a" style="left:1068px;top:381px;width:22px;height:22px;border-radius:50%;background:radial-gradient(55% 45% at 50% 30%,rgba(255,255,255,.9) 0%,rgba(255,255,255,0) 100%),radial-gradient(circle closest-side at 50% 50%,#efefef 0%,#e4e4e4 55%,#cfcfcf 72%,#a9a9a9 86%,#a6a6a6 90%,#c2c2c2 96%,#dcdcdc 100%);"><svg width="22" height="22" viewBox="-12 -12 24 24" style="position:absolute;left:0;top:0"><rect x="-7" y="-6" width="12" height="11" fill="none" stroke="#2a5a80" stroke-width="1.2" stroke-dasharray="2 1.5"/><path d="M-2 -2 L7 4 L3 5 L5 9 L3 10 L1 6 L-2 8Z" fill="#222"/></svg></div>
<div class="a" style="left:915px;top:433px;width:290px;height:49px;border:1px solid #e2e2e6;border-radius:4px"></div>
<div class="t" style="left:922.77px;top:426.66px;font-size:8.75px;line-height:8.75px;color:#333;font-weight:normal;transform:scaleX(0.979);transform-origin:0 0;background:#f2f2f2;padding:0 1px 2px 0">Operations</div>
<div class="a" style="left:928px;top:447px;width:22px;height:22px;border-radius:50%;background:radial-gradient(55% 45% at 50% 30%,rgba(255,255,255,.9) 0%,rgba(255,255,255,0) 100%),radial-gradient(circle closest-side at 50% 50%,#efefef 0%,#e4e4e4 55%,#cfcfcf 72%,#a9a9a9 86%,#a6a6a6 90%,#c2c2c2 96%,#dcdcdc 100%);opacity:.38;"><svg width="22" height="22" viewBox="-12 -12 24 24" style="position:absolute;left:0;top:0"><path d="M-7 7 L6 -6" stroke="#e08080" stroke-width="1.2"/><circle cx="-1" cy="1" r="5" fill="none" stroke="#aaa" stroke-width="1.2"/><path d="M4 -4 L7 -8" stroke="#777" stroke-width="2"/></svg></div>
<div class="a" style="left:30px;top:564px;width:1170px;height:163px;border-top:2px solid #f2a098;border-left:2px solid #e69a94;background:#f2f2f2"></div>
<div class="a" style="left:33px;top:568px;width:3px;height:22px;background-image:radial-gradient(circle closest-side,#a8a8a8 0,#b8b8b8 60%,transparent 100%);background-size:3px 3.7px"></div>
<div class="a" style="left:37px;top:569px;width:3px;height:22px;background-image:radial-gradient(circle closest-side,#cfcfcf 0,#d8d8d8 60%,transparent 100%);background-size:3px 3.7px"></div>
<div class="a" style="left:1117px;top:566px;width:54px;height:19px;background:#fff;border:1px solid #c4c4c4;border-bottom:none"></div>
<div class="t" style="left:1125.63px;top:568.85px;font-size:8.06px;line-height:8.06px;color:#333;font-weight:normal;transform:scaleX(1.036);transform-origin:0 0;">Timeline</div>
<div class="a" style="left:1174px;top:567px;width:28px;height:15px;background:#d8d8d8;border-radius:3px"></div>
<svg class="a" style="left:1175px;top:568px;" width="26" height="13" viewBox="0 0 26 13"><path d="M4.5 1.5 Q8.5 3 7 10.5" stroke="#555" stroke-width="2" fill="none"/><path d="M3.5 7 L7 12 L10.5 7Z" fill="#555"/><path d="M14 1 V12" stroke="#999" stroke-width="1"/><path d="M16 3 L24 11 M24 3 L16 11" stroke="#555" stroke-width="1.3"/></svg>
<div class="a" style="left:97px;top:566px;width:29px;height:27px;border:2px solid #8c8c8c;border-radius:3px;background:#e2e2e2"></div>
<div class="a" style="left:42px;top:567px;width:24px;height:24px;border-radius:50%;background:radial-gradient(55% 45% at 50% 30%,rgba(255,255,255,.9) 0%,rgba(255,255,255,0) 100%),radial-gradient(circle closest-side at 50% 50%,#efefef 0%,#e4e4e4 55%,#cfcfcf 72%,#a9a9a9 86%,#a6a6a6 90%,#c2c2c2 96%,#dcdcdc 100%);"><svg width="24" height="24" viewBox="-12 -12 24 24" style="position:absolute;left:0;top:0"><path d="M-1 -6 L-9 0 L-1 6Z M1 -6 L9 0 L1 6Z" fill="#4d7390"/></svg></div>
<div class="a" style="left:70px;top:567px;width:24px;height:24px;border-radius:50%;background:radial-gradient(55% 45% at 50% 30%,rgba(255,255,255,.9) 0%,rgba(255,255,255,0) 100%),radial-gradient(circle closest-side at 50% 50%,#efefef 0%,#e4e4e4 55%,#cfcfcf 72%,#a9a9a9 86%,#a6a6a6 90%,#c2c2c2 96%,#dcdcdc 100%);"><svg width="24" height="24" viewBox="-12 -12 24 24" style="position:absolute;left:0;top:0"><path d="M-12 -2 H12 L11.5 3 Q9 12 0 12 Q-9 12 -11.5 3Z" fill="#e58170"/><path d="M-12 -2 H12 L11.8 1.5 H-11.8Z" fill="#6e6e6e"/><path d="M-11 4 Q0 6 11 4 M-10 7 Q0 9 10 7" stroke="#f7b8a8" stroke-width="1" fill="none"/><path d="M-5 -6 Q0 -10 5 -6 Q0 -3 -5 -6Z" fill="#555"/><circle cx="0" cy="-6.2" r="1.3" fill="#ddd"/></svg></div>
<div class="a" style="left:99px;top:567px;width:24px;height:24px;border-radius:50%;background:radial-gradient(55% 45% at 50% 30%,rgba(255,255,255,.9) 0%,rgba(255,255,255,0) 100%),radial-gradient(circle closest-side at 50% 50%,#efefef 0%,#e4e4e4 55%,#cfcfcf 72%,#a9a9a9 86%,#a6a6a6 90%,#c2c2c2 96%,#dcdcdc 100%);"><svg width="24" height="24" viewBox="-12 -12 24 24" style="position:absolute;left:0;top:0"><path d="M-9 1 L-6 1 L-4 -3 L-2 5 L0 -9 L2 7 L4 -2 L6 3 L9 1" stroke="#4aa050" stroke-width="1.3" fill="none"/></svg></div>
<div class="a" style="left:128px;top:567px;width:24px;height:24px;border-radius:50%;background:radial-gradient(55% 45% at 50% 30%,rgba(255,255,255,.9) 0%,rgba(255,255,255,0) 100%),radial-gradient(circle closest-side at 50% 50%,#efefef 0%,#e4e4e4 55%,#cfcfcf 72%,#a9a9a9 86%,#a6a6a6 90%,#c2c2c2 96%,#dcdcdc 100%);"><svg width="24" height="24" viewBox="-12 -12 24 24" style="position:absolute;left:0;top:0"><rect x="-2" y="-1" width="10" height="9" fill="#f2d36b" stroke="#aa9a70" stroke-width="1"/><path d="M-2 8 L2 3 L5 6 L8 2 V8 Z" fill="#8bb26b"/><path d="M-7 2 Q-6 -6 2 -6" stroke="#4a6c8c" stroke-width="1.6" fill="none"/><path d="M1 -9 L4 -6 L1 -3Z" fill="#4a6c8c"/></svg></div>
<div class="a" style="left:156px;top:567px;width:24px;height:24px;border-radius:50%;background:radial-gradient(55% 45% at 50% 30%,rgba(255,255,255,.9) 0%,rgba(255,255,255,0) 100%),radial-gradient(circle closest-side at 50% 50%,#efefef 0%,#e4e4e4 55%,#cfcfcf 72%,#a9a9a9 86%,#a6a6a6 90%,#c2c2c2 96%,#dcdcdc 100%);"><svg width="24" height="24" viewBox="-12 -12 24 24" style="position:absolute;left:0;top:0"><rect x="-6" y="-4" width="5" height="11" fill="#e8f0f8" stroke="#5a7a90" stroke-width="1.1"/><rect x="-2" y="-6" width="6" height="12" fill="#e8f0f8" stroke="#5a7a90" stroke-width="1.1"/><path d="M4 2 H9 M4 5 H9" stroke="#333" stroke-width="1.3"/><path d="M1 -9 L5 -7" stroke="#333" stroke-width="1.2"/></svg></div>
<div class="a" style="left:184px;top:567px;width:24px;height:24px;border-radius:50%;background:radial-gradient(55% 45% at 50% 30%,rgba(255,255,255,.9) 0%,rgba(255,255,255,0) 100%),radial-gradient(circle closest-side at 50% 50%,#efefef 0%,#e4e4e4 55%,#cfcfcf 72%,#a9a9a9 86%,#a6a6a6 90%,#c2c2c2 96%,#dcdcdc 100%);"><svg width="24" height="24" viewBox="-12 -12 24 24" style="position:absolute;left:0;top:0"><rect x="-6" y="-4" width="5" height="11" fill="#e8f0f8" stroke="#5a7a90" stroke-width="1.1"/><rect x="-2" y="-6" width="6" height="12" fill="#e8f0f8" stroke="#5a7a90" stroke-width="1.1"/><path d="M6 0 V7 M3 3.5 H9.5" stroke="#333" stroke-width="1.3"/><path d="M1 -9 L5 -7" stroke="#333" stroke-width="1.2"/></svg></div>
<div class="a" style="left:212px;top:567px;width:24px;height:24px;border-radius:50%;background:radial-gradient(55% 45% at 50% 30%,rgba(255,255,255,.9) 0%,rgba(255,255,255,0) 100%),radial-gradient(circle closest-side at 50% 50%,#efefef 0%,#e4e4e4 55%,#cfcfcf 72%,#a9a9a9 86%,#a6a6a6 90%,#c2c2c2 96%,#dcdcdc 100%);opacity:.38;"><svg width="24" height="24" viewBox="-12 -12 24 24" style="position:absolute;left:0;top:0"><circle cx="-3" cy="-4" r="3" fill="none" stroke="#777" stroke-width="1.2"/><path d="M-2 8 L8 -2 V8Z" fill="#cfe0ee" stroke="#8899aa" stroke-width=".8"/></svg></div>
<div class="a" style="left:240px;top:567px;width:24px;height:24px;border-radius:50%;background:radial-gradient(55% 45% at 50% 30%,rgba(255,255,255,.9) 0%,rgba(255,255,255,0) 100%),radial-gradient(circle closest-side at 50% 50%,#efefef 0%,#e4e4e4 55%,#cfcfcf 72%,#a9a9a9 86%,#a6a6a6 90%,#c2c2c2 96%,#dcdcdc 100%);opacity:.38;"><svg width="24" height="24" viewBox="-12 -12 24 24" style="position:absolute;left:0;top:0"><circle cx="-3" cy="-4" r="3" fill="none" stroke="#777" stroke-width="1.2"/><path d="M-2 8 L8 -2 V8Z" fill="#cfe0ee" stroke="#8899aa" stroke-width=".8"/></svg></div>
<div class="a" style="left:269px;top:567px;width:24px;height:24px;border-radius:50%;background:radial-gradient(55% 45% at 50% 30%,rgba(255,255,255,.9) 0%,rgba(255,255,255,0) 100%),radial-gradient(circle closest-side at 50% 50%,#efefef 0%,#e4e4e4 55%,#cfcfcf 72%,#a9a9a9 86%,#a6a6a6 90%,#c2c2c2 96%,#dcdcdc 100%);opacity:.38;"><svg width="24" height="24" viewBox="-12 -12 24 24" style="position:absolute;left:0;top:0"><path d="M0 -10 L3 -7 L0 -4 L-3 -7Z" fill="none" stroke="#e06060" stroke-width="1.2"/><text x="-8" y="8" font-size="11" fill="#666" font-family="Liberation Sans">KF</text></svg></div>
<div class="a" style="left:297px;top:567px;width:24px;height:24px;border-radius:50%;background:radial-gradient(55% 45% at 50% 30%,rgba(255,255,255,.9) 0%,rgba(255,255,255,0) 100%),radial-gradient(circle closest-side at 50% 50%,#efefef 0%,#e4e4e4 55%,#cfcfcf 72%,#a9a9a9 86%,#a6a6a6 90%,#c2c2c2 96%,#dcdcdc 100%);opacity:.38;"><svg width="24" height="24" viewBox="-12 -12 24 24" style="position:absolute;left:0;top:0"><path d="M-3 -9 H3 V-5 H-3Z" fill="#e06060"/><text x="-8" y="8" font-size="11" fill="#666" font-family="Liberation Sans">KF</text></svg></div>
<div class="a" style="left:326px;top:567px;width:24px;height:24px;border-radius:50%;background:radial-gradient(55% 45% at 50% 30%,rgba(255,255,255,.9) 0%,rgba(255,255,255,0) 100%),radial-gradient(circle closest-side at 50% 50%,#efefef 0%,#e4e4e4 55%,#cfcfcf 72%,#a9a9a9 86%,#a6a6a6 90%,#c2c2c2 96%,#dcdcdc 100%);opacity:.38;"><svg width="24" height="24" viewBox="-12 -12 24 24" style="position:absolute;left:0;top:0"><path d="M3 -10 V-4 L-3 -7Z" fill="#e06060"/><text x="-8" y="8" font-size="11" fill="#666" font-family="Liberation Sans">KF</text></svg></div>
<div class="a" style="left:354px;top:567px;width:24px;height:24px;border-radius:50%;background:radial-gradient(55% 45% at 50% 30%,rgba(255,255,255,.9) 0%,rgba(255,255,255,0) 100%),radial-gradient(circle closest-side at 50% 50%,#efefef 0%,#e4e4e4 55%,#cfcfcf 72%,#a9a9a9 86%,#a6a6a6 90%,#c2c2c2 96%,#dcdcdc 100%);opacity:.38;"><svg width="24" height="24" viewBox="-12 -12 24 24" style="position:absolute;left:0;top:0"><path d="M-3 -10 V-4 L3 -7Z" fill="#e06060"/><text x="-8" y="8" font-size="11" fill="#666" font-family="Liberation Sans">KF</text></svg></div>
<div class="a" style="left:383px;top:567px;width:24px;height:24px;border-radius:50%;background:radial-gradient(55% 45% at 50% 30%,rgba(255,255,255,.9) 0%,rgba(255,255,255,0) 100%),radial-gradient(circle closest-side at 50% 50%,#efefef 0%,#e4e4e4 55%,#cfcfcf 72%,#a9a9a9 86%,#a6a6a6 90%,#c2c2c2 96%,#dcdcdc 100%);opacity:.38;"><svg width="24" height="24" viewBox="-12 -12 24 24" style="position:absolute;left:0;top:0"><path d="M-7 6 Q-3 -4 7 -5" stroke="#777" stroke-width="1.2" fill="none"/><circle cx="-7" cy="6" r="2" fill="#f0a030"/><circle cx="7" cy="-5" r="2" fill="#f0a030"/></svg></div>
<div class="a" style="left:411px;top:567px;width:24px;height:24px;border-radius:50%;background:radial-gradient(55% 45% at 50% 30%,rgba(255,255,255,.9) 0%,rgba(255,255,255,0) 100%),radial-gradient(circle closest-side at 50% 50%,#efefef 0%,#e4e4e4 55%,#cfcfcf 72%,#a9a9a9 86%,#a6a6a6 90%,#c2c2c2 96%,#dcdcdc 100%);opacity:.38;"><svg width="24" height="24" viewBox="-12 -12 24 24" style="position:absolute;left:0;top:0"><path d="M-8 0 H8" stroke="#777" stroke-width="1.2"/><circle cx="-8" cy="0" r="2" fill="#f0a030"/><circle cx="8" cy="0" r="2" fill="#f0a030"/></svg></div>
<div class="a" style="left:440px;top:567px;width:24px;height:24px;border-radius:50%;background:radial-gradient(55% 45% at 50% 30%,rgba(255,255,255,.9) 0%,rgba(255,255,255,0) 100%),radial-gradient(circle closest-side at 50% 50%,#e8e8e8 0%,#dcdcdc 55%,#c4c4c4 72%,#8c8c8c 86%,#8a8a8a 90%,#b0b0b0 96%,#d0d0d0 100%);"><svg width="24" height="24" viewBox="-12 -12 24 24" style="position:absolute;left:0;top:0"><rect x="-5" y="-8" width="8" height="12" fill="#fff" stroke="#444" stroke-width="1"/><path d="M3 -2 L5 3 L10 3 L6 6 L8 11 L3 8 L-2 11 L0 6 L-4 3 L1 3Z" fill="#f5a623"/></svg></div>
<div class="a" style="left:31px;top:595px;width:1169px;height:1px;background:#9c9c9c;"></div>
<div class="a" style="left:31px;top:596px;width:1169px;height:1px;background:#fafafa;"></div>
<div class="a" style="left:40px;top:598px;width:18px;height:18px;border-radius:50%;background:radial-gradient(circle closest-side at 50% 45%,#ffffff 0%,#ececec 45%,#c8c8c8 80%,#b0b0b0 100%);"><svg width="18" height="18" viewBox="-12 -12 24 24" style="position:absolute;left:0;top:0"><circle cx="-3" cy="0" r="3" fill="none" stroke="#444" stroke-width="1.5"/><circle cx="3" cy="0" r="3" fill="none" stroke="#444" stroke-width="1.5"/></svg></div>
<div class="a" style="left:65px;top:598px;width:18px;height:18px;border-radius:50%;background:radial-gradient(circle closest-side at 50% 45%,#ffffff 0%,#ececec 45%,#c8c8c8 80%,#b0b0b0 100%);"><svg width="18" height="18" viewBox="-12 -12 24 24" style="position:absolute;left:0;top:0"><path d="M-6 -1 L-3 4 L3 -6" stroke="#444" stroke-width="1.6" fill="none"/><circle cx="3" cy="3" r="2.5" fill="none" stroke="#444" stroke-width="1.2"/></svg></div>
<div class="a" style="left:89px;top:598px;width:18px;height:18px;border-radius:50%;background:radial-gradient(circle closest-side at 50% 45%,#ffffff 0%,#ececec 45%,#c8c8c8 80%,#b0b0b0 100%);"><svg width="18" height="18" viewBox="-12 -12 24 24" style="position:absolute;left:0;top:0"><path d="M0 -7 V7 M-7 0 H7" stroke="#333" stroke-width="1.8"/></svg></div>
<svg class="a" style="left:104px;top:612px;" width="4" height="4" viewBox="0 0 4 4"><path d="M4 0 V4 H0Z" fill="#444"/></svg>
<div class="a" style="left:108px;top:598px;width:18px;height:18px;border-radius:50%;background:radial-gradient(circle closest-side at 50% 45%,#ffffff 0%,#ececec 45%,#c8c8c8 80%,#b0b0b0 100%);opacity:.38;"><svg width="18" height="18" viewBox="-12 -12 24 24" style="position:absolute;left:0;top:0"><path d="M-6 0 H6" stroke="#aaa" stroke-width="1.5"/></svg></div>
<div class="a" style="left:131px;top:598px;width:18px;height:18px;border-radius:50%;background:radial-gradient(circle closest-side at 50% 45%,#ffffff 0%,#ececec 45%,#c8c8c8 80%,#b0b0b0 100%);"><svg width="18" height="18" viewBox="-12 -12 24 24" style="position:absolute;left:0;top:0"><circle cx="-2" cy="-2" r="3" fill="#5a8ab0"/><path d="M2 0 V8 M-2 4 H6" stroke="#333" stroke-width="1.5"/></svg></div>
<div class="a" style="left:156px;top:598px;width:18px;height:18px;border-radius:50%;background:radial-gradient(circle closest-side at 50% 45%,#ffffff 0%,#ececec 45%,#c8c8c8 80%,#b0b0b0 100%);"><svg width="18" height="18" viewBox="-12 -12 24 24" style="position:absolute;left:0;top:0"><circle cx="-2" cy="-2" r="3" fill="none" stroke="#c07060" stroke-width="1.2"/><path d="M2 0 V8 M-2 4 H6" stroke="#333" stroke-width="1.5"/></svg></div>
<div class="a" style="left:264px;top:598px;width:18px;height:18px;border-radius:50%;background:radial-gradient(circle closest-side at 50% 45%,#ffffff 0%,#ececec 45%,#c8c8c8 80%,#b0b0b0 100%);"><svg width="18" height="18" viewBox="-12 -12 24 24" style="position:absolute;left:0;top:0"><path d="M-1.5 -8 V8 M1.5 -8 V8" stroke="#a02020" stroke-width="1.4"/><path d="M-8 0 L-4 -4 V4Z M8 0 L4 -4 V4Z" fill="#a02020"/><path d="M-8 0 H8" stroke="#a02020" stroke-width="1"/></svg></div>
<div class="a" style="left:31px;top:618px;width:253px;height:1px;background:#b4b4b4;"></div>
<div class="a" style="left:31px;top:619px;width:237px;height:17px;background:#f2f2f2;"></div>
<div class="a" style="left:31px;top:636px;width:237px;height:1px;background:#c8c8c8;"></div>
<div class="a" style="left:31px;top:637px;width:237px;height:17px;background:#f2f2f2;"></div>
<div class="a" style="left:31px;top:654px;width:237px;height:1px;background:#c8c8c8;"></div>
<div class="a" style="left:31px;top:655px;width:237px;height:17px;background:#f2f2f2;"></div>
<div class="a" style="left:31px;top:672px;width:237px;height:1px;background:#c8c8c8;"></div>
<div class="a" style="left:31px;top:673px;width:237px;height:17px;background:#f2f2f2;"></div>
<div class="a" style="left:31px;top:690px;width:237px;height:1px;background:#c8c8c8;"></div>
<div class="a" style="left:31px;top:691px;width:237px;height:17px;background:#f2f2f2;"></div>
<div class="a" style="left:31px;top:708px;width:237px;height:1px;background:#c8c8c8;"></div>
<div class="a" style="left:31px;top:709px;width:237px;height:9px;background:#f2f2f2;"></div>
<div class="a" style="left:268px;top:619px;width:1px;height:99px;background:#d0d0d0;"></div>
<svg class="a" style="left:41px;top:621px;" width="12" height="12" viewBox="0 0 12 12"><path d="M1 4 H4 L8 1 V11 L4 8 H1Z" fill="#e8d060" stroke="#555" stroke-width="1"/><path d="M10 4 Q11.5 6 10 8" stroke="#555" stroke-width="1" fill="none"/></svg>
<svg class="a" style="left:80px;top:621px;" width="11" height="13" viewBox="0 0 11 13"><ellipse cx="4" cy="10" rx="3.5" ry="2.5" fill="#2a6ab0"/><path d="M7 10 V1 L10 4" stroke="#2a6ab0" stroke-width="2" fill="none"/></svg>
<div class="t" style="left:94.79px;top:623.38px;font-size:8.61px;line-height:8.61px;color:#333;font-weight:normal;transform:scaleX(0.987);transform-origin:0 0;">punch</div>
<svg class="a" style="left:41px;top:639px;" width="12" height="12" viewBox="0 0 12 12"><path d="M1 4 H4 L8 1 V11 L4 8 H1Z" fill="#e8d060" stroke="#555" stroke-width="1"/><path d="M10 4 Q11.5 6 10 8" stroke="#555" stroke-width="1" fill="none"/></svg>
<svg class="a" style="left:80px;top:639px;" width="11" height="13" viewBox="0 0 11 13"><ellipse cx="4" cy="10" rx="3.5" ry="2.5" fill="#2a6ab0"/><path d="M7 10 V1 L10 4" stroke="#2a6ab0" stroke-width="2" fill="none"/></svg>
<div class="t" style="left:94.59px;top:641.73px;font-size:8.19px;line-height:8.19px;color:#333;font-weight:normal;transform:scaleX(1.080);transform-origin:0 0;">Man_hit</div>
<div class="a" style="left:44px;top:658px;width:12px;height:12px;border:1px solid #8a96a8;background:linear-gradient(#eef2f6,#dfe6ee)"></div>
<svg class="a" style="left:46px;top:660px;" width="8" height="8" viewBox="0 0 8 8"><path d="M1 4 L3 7 L7 1" stroke="#3a5fb0" stroke-width="1.5" fill="none"/></svg>
<svg class="a" style="left:63px;top:656px;" width="10" height="14" viewBox="0 0 10 14"><path d="M1 13 V1 L8 10" stroke="#6a7aa0" stroke-width="1" fill="none"/></svg>
<svg class="a" style="left:80px;top:657px;" width="12" height="12" viewBox="0 0 12 12"><path d="M6 0 V12 M0 6 H12" stroke="#222" stroke-width="2"/></svg>
<svg class="a" style="left:95px;top:657px;" width="9" height="12" viewBox="0 0 9 12"><path d="M1 11 Q5 11 5 6 Q5 1 8 1" stroke="#d08830" stroke-width="1.3" fill="none"/></svg>
<div class="t" style="left:108.43px;top:659.09px;font-size:8.84px;line-height:8.84px;color:#222;font-weight:normal;transform:scaleX(0.951);transform-origin:0 0;">Peg</div>
<svg class="a" style="left:237px;top:658px;" width="10" height="11" viewBox="0 0 10 11"><rect x="1" y="5" width="8" height="6" fill="#b8b8b8"/><path d="M3 5 V3 A2 2 0 0 1 7 3" stroke="#b8b8b8" stroke-width="1.5" fill="none"/></svg>
<svg class="a" style="left:251px;top:657px;" width="12" height="12" viewBox="0 0 12 12"><ellipse cx="6" cy="2.5" rx="5" ry="2" fill="#777"/><path d="M1 2.5 V9.5 Q6 12 11 9.5 V2.5" fill="#bbb"/><path d="M1 5 Q6 7.5 11 5 M1 8 Q6 10.5 11 8" stroke="#777" stroke-width="1" fill="none"/></svg>
<div class="a" style="left:44px;top:676px;width:12px;height:12px;border:1px solid #8a96a8;background:linear-gradient(#eef2f6,#dfe6ee)"></div>
<svg class="a" style="left:46px;top:678px;" width="8" height="8" viewBox="0 0 8 8"><path d="M1 4 L3 7 L7 1" stroke="#3a5fb0" stroke-width="1.5" fill="none"/></svg>
<svg class="a" style="left:63px;top:674px;" width="10" height="14" viewBox="0 0 10 14"><path d="M1 13 V1 L8 10" stroke="#6a7aa0" stroke-width="1" fill="none"/></svg>
<svg class="a" style="left:80px;top:675px;" width="12" height="12" viewBox="0 0 12 12"><path d="M6 0 V12 M0 6 H12" stroke="#222" stroke-width="2"/></svg>
<svg class="a" style="left:95px;top:675px;" width="9" height="12" viewBox="0 0 9 12"><path d="M1 11 Q5 11 5 6 Q5 1 8 1" stroke="#d08830" stroke-width="1.3" fill="none"/></svg>
<div class="t" style="left:108.45px;top:677.09px;font-size:8.84px;line-height:8.84px;color:#222;font-weight:normal;transform:scaleX(0.919);transform-origin:0 0;">Peg_1</div>
<svg class="a" style="left:237px;top:676px;" width="10" height="11" viewBox="0 0 10 11"><rect x="1" y="5" width="8" height="6" fill="#b8b8b8"/><path d="M3 5 V3 A2 2 0 0 1 7 3" stroke="#b8b8b8" stroke-width="1.5" fill="none"/></svg>
<svg class="a" style="left:251px;top:675px;" width="12" height="12" viewBox="0 0 12 12"><ellipse cx="6" cy="2.5" rx="5" ry="2" fill="#777"/><path d="M1 2.5 V9.5 Q6 12 11 9.5 V2.5" fill="#bbb"/><path d="M1 5 Q6 7.5 11 5 M1 8 Q6 10.5 11 8" stroke="#777" stroke-width="1" fill="none"/></svg>
<div class="a" style="left:44px;top:694px;width:12px;height:12px;border:1px solid #8a96a8;background:linear-gradient(#eef2f6,#dfe6ee)"></div>
<svg class="a" style="left:80px;top:693px;" width="12" height="12" viewBox="0 0 12 12"><path d="M6 0 V12 M0 6 H12" stroke="#222" stroke-width="2"/></svg>
<svg class="a" style="left:93px;top:693px;" width="14" height="13" viewBox="0 0 14 13"><rect x="5" y="1" width="8" height="7" fill="#4aa0e0"/><circle cx="8" cy="9" r="4" fill="#f0d040" stroke="#444" stroke-width=".8"/><path d="M1 11 L5 2" stroke="#d06040" stroke-width="1.4"/></svg>
<div class="t" style="left:108.51px;top:695.57px;font-size:7.92px;line-height:7.92px;color:#e05a50;font-weight:normal;transform:scaleX(1.092);transform-origin:0 0;">Drawing_1</div>
<div class="a" style="left:221px;top:694px;width:11px;height:11px;border:1.5px solid #555;background:#ddd"></div>
<svg class="a" style="left:236px;top:693px;" width="10" height="12" viewBox="0 0 10 12"><rect x="1" y="5" width="8" height="7" fill="#8a3030"/><path d="M3 5 V3 A2 2 0 0 1 7 3 V5" stroke="#8a3030" stroke-width="1.5" fill="none"/></svg>
<svg class="a" style="left:251px;top:693px;" width="12" height="12" viewBox="0 0 12 12"><ellipse cx="6" cy="2.5" rx="5" ry="2" fill="#777"/><path d="M1 2.5 V9.5 Q6 12 11 9.5 V2.5" fill="#bbb"/><path d="M1 5 Q6 7.5 11 5 M1 8 Q6 10.5 11 8" stroke="#777" stroke-width="1" fill="none"/></svg>
<div class="a" style="left:31px;top:708px;width:237px;height:8px;overflow:hidden">
<div class="a" style="left:13px;top:3px;width:12px;height:12px;border:1px solid #8a96a8;background:#e6ebf0"></div><svg class="a" style="left:15px;top:5px" width="8" height="8"><path d="M1 4 L3 7 L7 1" stroke="#3a5fb0" stroke-width="1.5" fill="none"/></svg><svg class="a" style="left:49px;top:3px" width="12" height="12"><path d="M6 0 V12 M0 6 H12" stroke="#222" stroke-width="2"/></svg><svg class="a" style="left:62px;top:3px" width="14" height="13"><rect x="5" y="1" width="8" height="7" fill="#4aa0e0"/></svg><div class="t" style="left:77px;top:3px;font-size:10px;color:#e05a50">Drawing</div><div class="a" style="left:190px;top:4px;width:11px;height:11px;border:1.5px solid #555;background:#ddd"></div><svg class="a" style="left:205px;top:3px" width="10" height="12"><path d="M3 5 V3 A2 2 0 0 1 7 3 V5" stroke="#8a3030" stroke-width="1.5" fill="none"/></svg><svg class="a" style="left:220px;top:3px" width="12" height="12"><ellipse cx="6" cy="2.5" rx="5" ry="2" fill="#777"/></svg>
</div>
<div class="a" style="left:269px;top:619px;width:15px;height:98px;background:#f4f4f4;"></div>
<svg class="a" style="left:273px;top:625px;" width="7" height="4" viewBox="0 0 7 4"><path d="M0 4 L3.5 0 L7 4Z" fill="#666"/></svg>
<div class="a" style="left:270px;top:637px;width:14px;height:55px;background:linear-gradient(90deg,#fafafa,#dedede);border:1px solid #c0c0c0;border-radius:3px"></div>
<svg class="a" style="left:273px;top:660px;" width="8" height="7" viewBox="0 0 8 7"><path d="M0 1 H8 M0 3.5 H8 M0 6 H8" stroke="#777" stroke-width="1"/></svg>
<svg class="a" style="left:273px;top:707px;" width="7" height="4" viewBox="0 0 7 4"><path d="M0 0 H7 L3.5 4Z" fill="#666"/></svg>
<div class="a" style="left:31px;top:717px;width:253px;height:10px;background:#f2f2f2;"></div>
<svg class="a" style="left:40px;top:720px;" width="4" height="6" viewBox="0 0 4 6"><path d="M4 0 V6 L0 3Z" fill="#999"/></svg>
<svg class="a" style="left:180px;top:720px;" width="4" height="6" viewBox="0 0 4 6"><path d="M0 0 V6 L4 3Z" fill="#999"/></svg>
<svg class="a" style="left:210px;top:720px;" width="4" height="6" viewBox="0 0 4 6"><path d="M4 0 V6 L0 3Z" fill="#999"/></svg>
<svg class="a" style="left:260px;top:720px;" width="4" height="6" viewBox="0 0 4 6"><path d="M0 0 V6 L4 3Z" fill="#999"/></svg>
<svg class="a" style="left:0;top:0" width="1200" height="727"><rect x="289" y="618" width="911" height="92" fill="#ffffff"/><rect x="289" y="636" width="911" height="18" fill="#f3f3fb"/><rect x="289" y="672" width="911" height="18" fill="#f3f3fb"/><path d="M289.23 618 V710" stroke="#eeeef4" stroke-width=".8"/><path d="M296.77 618 V710" stroke="#eeeef4" stroke-width=".8"/><path d="M304.31 618 V710" stroke="#eeeef4" stroke-width=".8"/><path d="M311.85 618 V710" stroke="#eeeef4" stroke-width=".8"/><path d="M319.39 618 V710" stroke="#eeeef4" stroke-width=".8"/><path d="M326.93 618 V710" stroke="#eeeef4" stroke-width=".8"/><path d="M334.47 618 V710" stroke="#eeeef4" stroke-width=".8"/><path d="M342.01 618 V710" stroke="#eeeef4" stroke-width=".8"/><path d="M349.55 618 V710" stroke="#eeeef4" stroke-width=".8"/><path d="M357.09 618 V710" stroke="#eeeef4" stroke-width=".8"/><path d="M364.63 618 V710" stroke="#eeeef4" stroke-width=".8"/><path d="M372.17 618 V710" stroke="#eeeef4" stroke-width=".8"/><path d="M379.71 618 V710" stroke="#eeeef4" stroke-width=".8"/><path d="M387.25 618 V710" stroke="#eeeef4" stroke-width=".8"/><path d="M394.79 618 V710" stroke="#eeeef4" stroke-width=".8"/><path d="M402.33 618 V710" stroke="#eeeef4" stroke-width=".8"/><path d="M409.87 618 V710" stroke="#eeeef4" stroke-width=".8"/><path d="M417.41 618 V710" stroke="#eeeef4" stroke-width=".8"/><path d="M424.95 618 V710" stroke="#eeeef4" stroke-width=".8"/><path d="M432.49 618 V710" stroke="#eeeef4" stroke-width=".8"/><path d="M440.03 618 V710" stroke="#eeeef4" stroke-width=".8"/><path d="M447.57 618 V710" stroke="#eeeef4" stroke-width=".8"/><path d="M455.11 618 V710" stroke="#eeeef4" stroke-width=".8"/><path d="M462.65 618 V710" stroke="#eeeef4" stroke-width=".8"/><path d="M470.19 618 V710" stroke="#eeeef4" stroke-width=".8"/><path d="M477.73 618 V710" stroke="#eeeef4" stroke-width=".8"/><path d="M485.27 618 V710" stroke="#eeeef4" stroke-width=".8"/><path d="M492.81 618 V710" stroke="#eeeef4" stroke-width=".8"/><path d="M500.35 618 V710" stroke="#eeeef4" stroke-width=".8"/><path d="M507.89 618 V710" stroke="#eeeef4" stroke-width=".8"/><path d="M515.43 618 V710" stroke="#eeeef4" stroke-width=".8"/><path d="M522.97 618 V710" stroke="#eeeef4" stroke-width=".8"/><path d="M530.51 618 V710" stroke="#eeeef4" stroke-width=".8"/><path d="M538.05 618 V710" stroke="#eeeef4" stroke-width=".8"/><path d="M545.59 618 V710" stroke="#eeeef4" stroke-width=".8"/><path d="M553.13 618 V710" stroke="#eeeef4" stroke-width=".8"/><path d="M560.67 618 V710" stroke="#eeeef4" stroke-width=".8"/><path d="M568.21 618 V710" stroke="#eeeef4" stroke-width=".8"/><path d="M575.75 618 V710" stroke="#eeeef4" stroke-width=".8"/><path d="M583.29 618 V710" stroke="#eeeef4" stroke-width=".8"/><path d="M590.83 618 V710" stroke="#eeeef4" stroke-width=".8"/><path d="M598.37 618 V710" stroke="#eeeef4" stroke-width=".8"/><path d="M605.91 618 V710" stroke="#eeeef4" stroke-width=".8"/><path d="M613.45 618 V710" stroke="#eeeef4" stroke-width=".8"/><path d="M620.99 618 V710" stroke="#eeeef4" stroke-width=".8"/><path d="M628.53 618 V710" stroke="#eeeef4" stroke-width=".8"/><path d="M636.07 618 V710" stroke="#eeeef4" stroke-width=".8"/><path d="M643.61 618 V710" stroke="#eeeef4" stroke-width=".8"/><path d="M651.15 618 V710" stroke="#eeeef4" stroke-width=".8"/><path d="M658.69 618 V710" stroke="#eeeef4" stroke-width=".8"/><path d="M666.23 618 V710" stroke="#eeeef4" stroke-width=".8"/><path d="M673.77 618 V710" stroke="#eeeef4" stroke-width=".8"/><path d="M681.31 618 V710" stroke="#eeeef4" stroke-width=".8"/><path d="M688.85 618 V710" stroke="#eeeef4" stroke-width=".8"/><path d="M696.39 618 V710" stroke="#eeeef4" stroke-width=".8"/><path d="M703.93 618 V710" stroke="#eeeef4" stroke-width=".8"/><path d="M711.47 618 V710" stroke="#eeeef4" stroke-width=".8"/><path d="M719.01 618 V710" stroke="#eeeef4" stroke-width=".8"/><path d="M726.55 618 V710" stroke="#eeeef4" stroke-width=".8"/><path d="M734.09 618 V710" stroke="#eeeef4" stroke-width=".8"/><path d="M741.63 618 V710" stroke="#eeeef4" stroke-width=".8"/><path d="M749.17 618 V710" stroke="#eeeef4" stroke-width=".8"/><path d="M756.71 618 V710" stroke="#eeeef4" stroke-width=".8"/><path d="M764.25 618 V710" stroke="#eeeef4" stroke-width=".8"/><path d="M771.79 618 V710" stroke="#eeeef4" stroke-width=".8"/><path d="M779.33 618 V710" stroke="#eeeef4" stroke-width=".8"/><path d="M786.87 618 V710" stroke="#eeeef4" stroke-width=".8"/><path d="M794.41 618 V710" stroke="#eeeef4" stroke-width=".8"/><path d="M801.95 618 V710" stroke="#eeeef4" stroke-width=".8"/><path d="M809.49 618 V710" stroke="#eeeef4" stroke-width=".8"/><path d="M817.03 618 V710" stroke="#eeeef4" stroke-width=".8"/><path d="M824.57 618 V710" stroke="#eeeef4" stroke-width=".8"/><path d="M832.11 618 V710" stroke="#eeeef4" stroke-width=".8"/><path d="M839.65 618 V710" stroke="#eeeef4" stroke-width=".8"/><path d="M847.19 618 V710" stroke="#eeeef4" stroke-width=".8"/><path d="M854.73 618 V710" stroke="#eeeef4" stroke-width=".8"/><path d="M862.27 618 V710" stroke="#eeeef4" stroke-width=".8"/><path d="M869.81 618 V710" stroke="#eeeef4" stroke-width=".8"/><path d="M877.35 618 V710" stroke="#eeeef4" stroke-width=".8"/><path d="M884.89 618 V710" stroke="#eeeef4" stroke-width=".8"/><path d="M892.43 618 V710" stroke="#eeeef4" stroke-width=".8"/><path d="M899.97 618 V710" stroke="#eeeef4" stroke-width=".8"/><path d="M907.51 618 V710" stroke="#eeeef4" stroke-width=".8"/><path d="M915.05 618 V710" stroke="#eeeef4" stroke-width=".8"/><path d="M922.59 618 V710" stroke="#eeeef4" stroke-width=".8"/><path d="M930.13 618 V710" stroke="#eeeef4" stroke-width=".8"/><path d="M937.67 618 V710" stroke="#eeeef4" stroke-width=".8"/><path d="M945.21 618 V710" stroke="#eeeef4" stroke-width=".8"/><path d="M952.75 618 V710" stroke="#eeeef4" stroke-width=".8"/><path d="M960.29 618 V710" stroke="#eeeef4" stroke-width=".8"/><path d="M967.83 618 V710" stroke="#eeeef4" stroke-width=".8"/><path d="M975.37 618 V710" stroke="#eeeef4" stroke-width=".8"/><path d="M982.91 618 V710" stroke="#eeeef4" stroke-width=".8"/><path d="M990.45 618 V710" stroke="#eeeef4" stroke-width=".8"/><path d="M997.99 618 V710" stroke="#eeeef4" stroke-width=".8"/><path d="M1005.53 618 V710" stroke="#eeeef4" stroke-width=".8"/><path d="M1013.07 618 V710" stroke="#eeeef4" stroke-width=".8"/><path d="M1020.61 618 V710" stroke="#eeeef4" stroke-width=".8"/><path d="M1028.15 618 V710" stroke="#eeeef4" stroke-width=".8"/><path d="M1035.69 618 V710" stroke="#eeeef4" stroke-width=".8"/><path d="M1043.23 618 V710" stroke="#eeeef4" stroke-width=".8"/><path d="M1050.77 618 V710" stroke="#eeeef4" stroke-width=".8"/><path d="M1058.31 618 V710" stroke="#eeeef4" stroke-width=".8"/><path d="M1065.85 618 V710" stroke="#eeeef4" stroke-width=".8"/><path d="M1073.39 618 V710" stroke="#eeeef4" stroke-width=".8"/><path d="M1080.93 618 V710" stroke="#eeeef4" stroke-width=".8"/><path d="M1088.47 618 V710" stroke="#eeeef4" stroke-width=".8"/><path d="M1096.01 618 V710" stroke="#eeeef4" stroke-width=".8"/><path d="M1103.55 618 V710" stroke="#eeeef4" stroke-width=".8"/><path d="M1111.09 618 V710" stroke="#eeeef4" stroke-width=".8"/><path d="M1118.63 618 V710" stroke="#eeeef4" stroke-width=".8"/><path d="M1126.17 618 V710" stroke="#eeeef4" stroke-width=".8"/><path d="M1133.71 618 V710" stroke="#eeeef4" stroke-width=".8"/><path d="M1141.25 618 V710" stroke="#eeeef4" stroke-width=".8"/><path d="M1148.79 618 V710" stroke="#eeeef4" stroke-width=".8"/><path d="M1156.33 618 V710" stroke="#eeeef4" stroke-width=".8"/><path d="M1163.87 618 V710" stroke="#eeeef4" stroke-width=".8"/><path d="M1171.41 618 V710" stroke="#eeeef4" stroke-width=".8"/><path d="M1178.95 618 V710" stroke="#eeeef4" stroke-width=".8"/><path d="M1186.49 618 V710" stroke="#eeeef4" stroke-width=".8"/><path d="M1194.03 618 V710" stroke="#eeeef4" stroke-width=".8"/><path d="M1201.57 618 V710" stroke="#eeeef4" stroke-width=".8"/><path d="M1209.11 618 V710" stroke="#eeeef4" stroke-width=".8"/><path d="M1216.65 618 V710" stroke="#eeeef4" stroke-width=".8"/><rect x="358.09" y="618" width="5.54" height="92" fill="#e8e8e8" opacity=".7"/><rect x="433.49" y="618" width="5.54" height="92" fill="#e8e8e8" opacity=".7"/><rect x="508.89" y="618" width="5.54" height="92" fill="#e8e8e8" opacity=".7"/><rect x="584.29" y="618" width="5.54" height="92" fill="#e8e8e8" opacity=".7"/><rect x="659.69" y="618" width="5.54" height="92" fill="#e8e8e8" opacity=".7"/><rect x="735.09" y="618" width="5.54" height="92" fill="#e8e8e8" opacity=".7"/><rect x="810.49" y="618" width="5.54" height="92" fill="#e8e8e8" opacity=".7"/><rect x="885.89" y="618" width="5.54" height="92" fill="#e8e8e8" opacity=".7"/><rect x="961.29" y="618" width="5.54" height="92" fill="#e8e8e8" opacity=".7"/><rect x="1036.69" y="618" width="5.54" height="92" fill="#e8e8e8" opacity=".7"/><rect x="1112.09" y="618" width="5.54" height="92" fill="#e8e8e8" opacity=".7"/><rect x="1187.49" y="618" width="5.54" height="92" fill="#e8e8e8" opacity=".7"/><rect x="289" y="597" width="911" height="21" fill="#f2f2f2"/><rect x="289" y="610" width="911" height="8" fill="#ffffff"/><path d="M289.23 613 V617" stroke="#b4b4b4" stroke-width="1"/><path d="M296.77 613 V617" stroke="#b4b4b4" stroke-width="1"/><path d="M304.31 613 V617" stroke="#b4b4b4" stroke-width="1"/><path d="M311.85 613 V617" stroke="#b4b4b4" stroke-width="1"/><path d="M319.39 613 V617" stroke="#b4b4b4" stroke-width="1"/><path d="M326.93 613 V617" stroke="#b4b4b4" stroke-width="1"/><path d="M334.47 613 V617" stroke="#b4b4b4" stroke-width="1"/><path d="M342.01 613 V617" stroke="#b4b4b4" stroke-width="1"/><path d="M349.55 613 V617" stroke="#b4b4b4" stroke-width="1"/><path d="M357.09 613 V617" stroke="#b4b4b4" stroke-width="1"/><path d="M364.63 613 V617" stroke="#b4b4b4" stroke-width="1"/><path d="M372.17 613 V617" stroke="#b4b4b4" stroke-width="1"/><path d="M379.71 613 V617" stroke="#b4b4b4" stroke-width="1"/><path d="M387.25 613 V617" stroke="#b4b4b4" stroke-width="1"/><path d="M394.79 613 V617" stroke="#b4b4b4" stroke-width="1"/><path d="M402.33 613 V617" stroke="#b4b4b4" stroke-width="1"/><path d="M409.87 613 V617" stroke="#b4b4b4" stroke-width="1"/><path d="M417.41 613 V617" stroke="#b4b4b4" stroke-width="1"/><path d="M424.95 613 V617" stroke="#b4b4b4" stroke-width="1"/><path d="M432.49 613 V617" stroke="#b4b4b4" stroke-width="1"/><path d="M440.03 613 V617" stroke="#b4b4b4" stroke-width="1"/><path d="M447.57 613 V617" stroke="#b4b4b4" stroke-width="1"/><path d="M455.11 613 V617" stroke="#b4b4b4" stroke-width="1"/><path d="M462.65 613 V617" stroke="#b4b4b4" stroke-width="1"/><path d="M470.19 613 V617" stroke="#b4b4b4" stroke-width="1"/><path d="M477.73 613 V617" stroke="#b4b4b4" stroke-width="1"/><path d="M485.27 613 V617" stroke="#b4b4b4" stroke-width="1"/><path d="M492.81 613 V617" stroke="#b4b4b4" stroke-width="1"/><path d="M500.35 613 V617" stroke="#b4b4b4" stroke-width="1"/><path d="M507.89 613 V617" stroke="#b4b4b4" stroke-width="1"/><path d="M515.43 613 V617" stroke="#b4b4b4" stroke-width="1"/><path d="M522.97 613 V617" stroke="#b4b4b4" stroke-width="1"/><path d="M530.51 613 V617" stroke="#b4b4b4" stroke-width="1"/><path d="M538.05 613 V617" stroke="#b4b4b4" stroke-width="1"/><path d="M545.59 613 V617" stroke="#b4b4b4" stroke-width="1"/><path d="M553.13 613 V617" stroke="#b4b4b4" stroke-width="1"/><path d="M560.67 613 V617" stroke="#b4b4b4" stroke-width="1"/><path d="M568.21 613 V617" stroke="#b4b4b4" stroke-width="1"/><path d="M575.75 613 V617" stroke="#b4b4b4" stroke-width="1"/><path d="M583.29 613 V617" stroke="#b4b4b4" stroke-width="1"/><path d="M590.83 613 V617" stroke="#b4b4b4" stroke-width="1"/><path d="M598.37 613 V617" stroke="#b4b4b4" stroke-width="1"/><path d="M605.91 613 V617" stroke="#b4b4b4" stroke-width="1"/><path d="M613.45 613 V617" stroke="#b4b4b4" stroke-width="1"/><path d="M620.99 613 V617" stroke="#b4b4b4" stroke-width="1"/><path d="M628.53 613 V617" stroke="#b4b4b4" stroke-width="1"/><path d="M636.07 613 V617" stroke="#b4b4b4" stroke-width="1"/><path d="M643.61 613 V617" stroke="#b4b4b4" stroke-width="1"/><path d="M651.15 613 V617" stroke="#b4b4b4" stroke-width="1"/><path d="M658.69 613 V617" stroke="#b4b4b4" stroke-width="1"/><path d="M666.23 613 V617" stroke="#b4b4b4" stroke-width="1"/><path d="M673.77 613 V617" stroke="#b4b4b4" stroke-width="1"/><path d="M681.31 613 V617" stroke="#b4b4b4" stroke-width="1"/><path d="M688.85 613 V617" stroke="#b4b4b4" stroke-width="1"/><path d="M696.39 613 V617" stroke="#b4b4b4" stroke-width="1"/><path d="M703.93 613 V617" stroke="#b4b4b4" stroke-width="1"/><path d="M711.47 613 V617" stroke="#b4b4b4" stroke-width="1"/><path d="M719.01 613 V617" stroke="#b4b4b4" stroke-width="1"/><path d="M726.55 613 V617" stroke="#b4b4b4" stroke-width="1"/><path d="M734.09 613 V617" stroke="#b4b4b4" stroke-width="1"/><path d="M741.63 613 V617" stroke="#b4b4b4" stroke-width="1"/><path d="M749.17 613 V617" stroke="#b4b4b4" stroke-width="1"/><path d="M756.71 613 V617" stroke="#b4b4b4" stroke-width="1"/><path d="M764.25 613 V617" stroke="#b4b4b4" stroke-width="1"/><path d="M771.79 613 V617" stroke="#b4b4b4" stroke-width="1"/><path d="M779.33 613 V617" stroke="#b4b4b4" stroke-width="1"/><path d="M786.87 613 V617" stroke="#b4b4b4" stroke-width="1"/><path d="M794.41 613 V617" stroke="#b4b4b4" stroke-width="1"/><path d="M801.95 613 V617" stroke="#b4b4b4" stroke-width="1"/><path d="M809.49 613 V617" stroke="#b4b4b4" stroke-width="1"/><path d="M817.03 613 V617" stroke="#b4b4b4" stroke-width="1"/><path d="M824.57 613 V617" stroke="#b4b4b4" stroke-width="1"/><path d="M832.11 613 V617" stroke="#b4b4b4" stroke-width="1"/><path d="M839.65 613 V617" stroke="#b4b4b4" stroke-width="1"/><path d="M847.19 613 V617" stroke="#b4b4b4" stroke-width="1"/><path d="M854.73 613 V617" stroke="#b4b4b4" stroke-width="1"/><path d="M862.27 613 V617" stroke="#b4b4b4" stroke-width="1"/><path d="M869.81 613 V617" stroke="#b4b4b4" stroke-width="1"/><path d="M877.35 613 V617" stroke="#b4b4b4" stroke-width="1"/><path d="M884.89 613 V617" stroke="#b4b4b4" stroke-width="1"/><path d="M892.43 613 V617" stroke="#b4b4b4" stroke-width="1"/><path d="M899.97 613 V617" stroke="#b4b4b4" stroke-width="1"/><path d="M907.51 613 V617" stroke="#b4b4b4" stroke-width="1"/><path d="M915.05 613 V617" stroke="#b4b4b4" stroke-width="1"/><path d="M922.59 613 V617" stroke="#b4b4b4" stroke-width="1"/><path d="M930.13 613 V617" stroke="#b4b4b4" stroke-width="1"/><path d="M937.67 613 V617" stroke="#b4b4b4" stroke-width="1"/><path d="M945.21 613 V617" stroke="#b4b4b4" stroke-width="1"/><path d="M952.75 613 V617" stroke="#b4b4b4" stroke-width="1"/><path d="M960.29 613 V617" stroke="#b4b4b4" stroke-width="1"/><path d="M967.83 613 V617" stroke="#b4b4b4" stroke-width="1"/><path d="M975.37 613 V617" stroke="#b4b4b4" stroke-width="1"/><path d="M982.91 613 V617" stroke="#b4b4b4" stroke-width="1"/><path d="M990.45 613 V617" stroke="#b4b4b4" stroke-width="1"/><path d="M997.99 613 V617" stroke="#b4b4b4" stroke-width="1"/><path d="M1005.53 613 V617" stroke="#b4b4b4" stroke-width="1"/><path d="M1013.07 613 V617" stroke="#b4b4b4" stroke-width="1"/><path d="M1020.61 613 V617" stroke="#b4b4b4" stroke-width="1"/><path d="M1028.15 613 V617" stroke="#b4b4b4" stroke-width="1"/><path d="M1035.69 613 V617" stroke="#b4b4b4" stroke-width="1"/><path d="M1043.23 613 V617" stroke="#b4b4b4" stroke-width="1"/><path d="M1050.77 613 V617" stroke="#b4b4b4" stroke-width="1"/><path d="M1058.31 613 V617" stroke="#b4b4b4" stroke-width="1"/><path d="M1065.85 613 V617" stroke="#b4b4b4" stroke-width="1"/><path d="M1073.39 613 V617" stroke="#b4b4b4" stroke-width="1"/><path d="M1080.93 613 V617" stroke="#b4b4b4" stroke-width="1"/><path d="M1088.47 613 V617" stroke="#b4b4b4" stroke-width="1"/><path d="M1096.01 613 V617" stroke="#b4b4b4" stroke-width="1"/><path d="M1103.55 613 V617" stroke="#b4b4b4" stroke-width="1"/><path d="M1111.09 613 V617" stroke="#b4b4b4" stroke-width="1"/><path d="M1118.63 613 V617" stroke="#b4b4b4" stroke-width="1"/><path d="M1126.17 613 V617" stroke="#b4b4b4" stroke-width="1"/><path d="M1133.71 613 V617" stroke="#b4b4b4" stroke-width="1"/><path d="M1141.25 613 V617" stroke="#b4b4b4" stroke-width="1"/><path d="M1148.79 613 V617" stroke="#b4b4b4" stroke-width="1"/><path d="M1156.33 613 V617" stroke="#b4b4b4" stroke-width="1"/><path d="M1163.87 613 V617" stroke="#b4b4b4" stroke-width="1"/><path d="M1171.41 613 V617" stroke="#b4b4b4" stroke-width="1"/><path d="M1178.95 613 V617" stroke="#b4b4b4" stroke-width="1"/><path d="M1186.49 613 V617" stroke="#b4b4b4" stroke-width="1"/><path d="M1194.03 613 V617" stroke="#b4b4b4" stroke-width="1"/><path d="M1201.57 613 V617" stroke="#b4b4b4" stroke-width="1"/><path d="M1209.11 613 V617" stroke="#b4b4b4" stroke-width="1"/><path d="M1216.65 613 V617" stroke="#b4b4b4" stroke-width="1"/><path d="M289 617.5 H1200" stroke="#8a8a8a" stroke-width="1.2"/><path d="M290 618 V611 L293 610 V618Z" fill="#111"/><text x="360.9" y="609" font-size="9.5" fill="#b8b8b8" text-anchor="middle" font-family="Liberation Sans">10</text><text x="436.3" y="609" font-size="9.5" fill="#b8b8b8" text-anchor="middle" font-family="Liberation Sans">20</text><text x="511.7" y="609" font-size="9.5" fill="#b8b8b8" text-anchor="middle" font-family="Liberation Sans">30</text><text x="587.1" y="609" font-size="9.5" fill="#b8b8b8" text-anchor="middle" font-family="Liberation Sans">40</text><text x="662.5" y="609" font-size="9.5" fill="#b8b8b8" text-anchor="middle" font-family="Liberation Sans">50</text><text x="737.9" y="609" font-size="9.5" fill="#b8b8b8" text-anchor="middle" font-family="Liberation Sans">60</text><text x="813.3" y="609" font-size="9.5" fill="#b8b8b8" text-anchor="middle" font-family="Liberation Sans">70</text><text x="888.7" y="609" font-size="9.5" fill="#b8b8b8" text-anchor="middle" font-family="Liberation Sans">80</text><text x="964.1" y="609" font-size="9.5" fill="#b8b8b8" text-anchor="middle" font-family="Liberation Sans">90</text><text x="1039.5" y="609" font-size="9.5" fill="#b8b8b8" text-anchor="middle" font-family="Liberation Sans">100</text><text x="1114.9" y="609" font-size="9.5" fill="#b8b8b8" text-anchor="middle" font-family="Liberation Sans">110</text><text x="1190.3" y="609" font-size="9.5" fill="#b8b8b8" text-anchor="middle" font-family="Liberation Sans">120</text><path d="M289 627.7 H1200 M289 645.5 H1200" stroke="#5a5a5a" stroke-width="1.4"/><polygon points="702.5,626.5 703.5,625.5 704.5,623.7 705.5,623.8 706.5,622.7 707.6,620.6 708.6,620.0 709.6,620.4 710.6,620.5 711.6,620.8 712.6,618.8 713.6,620.6 714.6,619.6 715.6,620.7 716.6,621.0 717.7,621.1 718.7,621.7 719.7,621.7 720.7,619.5 721.7,622.3 722.7,621.3 723.7,621.8 724.7,621.5 725.7,622.2 726.8,622.3 727.8,622.6 728.8,622.9 729.8,623.4 730.8,623.7 731.8,624.0 732.8,624.5 733.8,624.7 734.8,625.2 735.8,625.2 736.9,625.7 737.9,625.7 738.9,625.8 739.9,625.7 740.9,625.8 741.9,625.7 742.9,625.7 743.9,625.8 744.9,625.8 745.9,625.8 747.0,625.8 748.0,625.8 749.0,625.9 750.0,625.8 751.0,625.7 751.0,629.6 750.0,629.5 749.0,629.4 748.0,629.5 747.0,629.5 745.9,629.5 744.9,629.5 743.9,629.5 742.9,629.6 741.9,629.6 740.9,629.5 739.9,629.6 738.9,629.5 737.9,629.6 736.9,629.6 735.8,630.0 734.8,630.1 733.8,630.5 732.8,630.8 731.8,631.2 730.8,631.5 729.8,631.7 728.8,632.3 727.8,632.5 726.8,632.8 725.7,633.0 724.7,633.6 723.7,633.3 722.7,633.8 721.7,632.8 720.7,635.5 719.7,633.4 718.7,633.4 717.7,634.0 716.6,634.1 715.6,634.4 714.6,635.4 713.6,634.4 712.6,636.2 711.6,634.2 710.6,634.5 709.6,634.6 708.6,635.0 707.6,634.4 706.5,632.5 705.5,631.4 704.5,631.5 703.5,629.8 702.5,628.8" fill="#000"/><polygon points="920.5,626.5 921.5,625.4 922.5,624.3 923.5,623.8 924.5,621.8 925.6,619.0 926.6,620.6 927.6,620.6 928.6,621.6 929.6,621.2 930.6,620.5 931.6,618.7 932.6,619.1 933.6,622.0 934.6,621.8 935.7,620.7 936.7,621.8 937.7,621.6 938.7,622.1 939.7,621.5 940.7,621.4 941.7,622.2 942.7,620.3 943.7,622.2 944.8,623.0 945.8,623.0 946.8,622.9 947.8,623.7 948.8,623.8 949.8,624.0 950.8,624.4 951.8,625.1 952.8,625.2 953.8,625.5 954.9,625.6 955.9,625.8 956.9,625.7 957.9,625.8 958.9,625.8 959.9,625.9 960.9,625.7 961.9,625.9 962.9,625.9 963.9,625.8 965.0,625.8 966.0,625.8 967.0,625.8 968.0,625.9 969.0,625.7 969.0,629.6 968.0,629.4 967.0,629.5 966.0,629.5 965.0,629.5 963.9,629.5 962.9,629.4 961.9,629.4 960.9,629.6 959.9,629.4 958.9,629.5 957.9,629.5 956.9,629.6 955.9,629.5 954.9,629.7 953.8,629.8 952.8,630.1 951.8,630.2 950.8,630.8 949.8,631.2 948.8,631.4 947.8,631.5 946.8,632.3 945.8,632.2 944.8,632.2 943.7,632.9 942.7,634.7 941.7,633.0 940.7,633.7 939.7,633.6 938.7,633.0 937.7,633.5 936.7,633.3 935.7,634.3 934.6,633.3 933.6,633.1 932.6,635.9 931.6,636.2 930.6,634.5 929.6,633.9 928.6,633.5 927.6,634.5 926.6,634.4 925.6,636.0 924.5,633.3 923.5,631.4 922.5,630.9 921.5,629.9 920.5,628.8" fill="#000"/><polygon points="1087.5,626.5 1088.5,625.1 1089.5,624.4 1090.5,623.8 1091.5,622.9 1092.6,620.2 1093.6,620.7 1094.6,621.3 1095.6,620.6 1096.6,620.7 1097.6,618.3 1098.6,620.5 1099.6,619.8 1100.6,621.5 1101.6,621.8 1102.7,621.2 1103.7,619.7 1104.7,622.2 1105.7,621.5 1106.7,622.0 1107.7,621.9 1108.7,621.6 1109.7,621.9 1110.7,621.9 1111.8,622.1 1112.8,622.3 1113.8,623.3 1114.8,623.9 1115.8,624.3 1116.8,624.1 1117.8,624.4 1118.8,624.8 1119.8,625.1 1120.8,625.3 1121.9,625.6 1122.9,625.8 1123.9,625.8 1124.9,625.7 1125.9,625.8 1126.9,625.9 1127.9,625.9 1128.9,625.9 1129.9,625.9 1130.9,625.8 1132.0,625.9 1133.0,625.8 1134.0,625.7 1135.0,625.8 1136.0,625.8 1136.0,629.5 1135.0,629.5 1134.0,629.6 1133.0,629.5 1132.0,629.4 1130.9,629.5 1129.9,629.4 1128.9,629.4 1127.9,629.5 1126.9,629.4 1125.9,629.5 1124.9,629.6 1123.9,629.5 1122.9,629.5 1121.9,629.7 1120.8,630.0 1119.8,630.2 1118.8,630.5 1117.8,630.9 1116.8,631.1 1115.8,631.0 1114.8,631.3 1113.8,631.9 1112.8,632.8 1111.8,633.0 1110.7,633.2 1109.7,633.2 1108.7,633.5 1107.7,633.2 1106.7,633.1 1105.7,633.6 1104.7,632.9 1103.7,635.3 1102.7,633.9 1101.6,633.3 1100.6,633.6 1099.6,635.2 1098.6,634.6 1097.6,636.6 1096.6,634.3 1095.6,634.5 1094.6,633.8 1093.6,634.3 1092.6,634.8 1091.5,632.2 1090.5,631.4 1089.5,630.8 1088.5,630.2 1087.5,628.8" fill="#000"/><path d="M296.0 663.7 H320.2" stroke="#767676" stroke-width="1.5"/><path d="M363.9 663.7 H380.5" stroke="#767676" stroke-width="1.5"/><path d="M386.5 663.7 H425.7" stroke="#767676" stroke-width="1.5"/><path d="M431.7 663.7 H433.3" stroke="#767676" stroke-width="1.5"/><path d="M439.3 663.7 H463.4" stroke="#767676" stroke-width="1.5"/><path d="M469.4 663.7 H493.6" stroke="#767676" stroke-width="1.5"/><path d="M499.6 663.7 H523.7" stroke="#767676" stroke-width="1.5"/><path d="M529.7 663.7 H553.9" stroke="#767676" stroke-width="1.5"/><path d="M559.9 663.7 H584.1" stroke="#767676" stroke-width="1.5"/><path d="M590.1 663.7 H614.2" stroke="#767676" stroke-width="1.5"/><path d="M620.2 663.7 H644.4" stroke="#767676" stroke-width="1.5"/><path d="M650.4 663.7 H674.5" stroke="#767676" stroke-width="1.5"/><path d="M680.5 663.7 H704.7" stroke="#767676" stroke-width="1.5"/><path d="M710.7 663.7 H712.2" stroke="#767676" stroke-width="1.5"/><path d="M718.2 663.7 H727.3" stroke="#767676" stroke-width="1.5"/><path d="M733.3 663.7 H749.9" stroke="#767676" stroke-width="1.5"/><path d="M755.9 663.7 H772.6" stroke="#767676" stroke-width="1.5"/><path d="M778.6 663.7 H795.2" stroke="#767676" stroke-width="1.5"/><path d="M801.2 663.7 H810.3" stroke="#767676" stroke-width="1.5"/><path d="M816.3 663.7 H825.3" stroke="#767676" stroke-width="1.5"/><path d="M831.3 663.7 H848.0" stroke="#767676" stroke-width="1.5"/><path d="M854.0 663.7 H863.0" stroke="#767676" stroke-width="1.5"/><path d="M869.0 663.7 H878.1" stroke="#767676" stroke-width="1.5"/><path d="M884.1 663.7 H893.2" stroke="#767676" stroke-width="1.5"/><path d="M899.2 663.7 H908.3" stroke="#767676" stroke-width="1.5"/><path d="M914.3 663.7 H915.8" stroke="#767676" stroke-width="1.5"/><path d="M921.8 663.7 H938.4" stroke="#767676" stroke-width="1.5"/><path d="M944.4 663.7 H961.1" stroke="#767676" stroke-width="1.5"/><path d="M967.1 663.7 H968.6" stroke="#767676" stroke-width="1.5"/><path d="M974.6 663.7 H991.2" stroke="#767676" stroke-width="1.5"/><path d="M997.2 663.7 H1013.8" stroke="#767676" stroke-width="1.5"/><path d="M1019.8 663.7 H1028.9" stroke="#767676" stroke-width="1.5"/><path d="M1034.9 663.7 H1044.0" stroke="#767676" stroke-width="1.5"/><path d="M1050.0 663.7 H1059.1" stroke="#767676" stroke-width="1.5"/><path d="M1065.1 663.7 H1074.2" stroke="#767676" stroke-width="1.5"/><path d="M1080.2 663.7 H1081.7" stroke="#767676" stroke-width="1.5"/><path d="M1087.7 663.7 H1096.8" stroke="#767676" stroke-width="1.5"/><path d="M1102.8 663.7 H1104.3" stroke="#767676" stroke-width="1.5"/><path d="M1110.3 663.7 H1126.9" stroke="#767676" stroke-width="1.5"/><path d="M1132.9 663.7 H1142.0" stroke="#767676" stroke-width="1.5"/><path d="M1148.0 663.7 H1157.1" stroke="#767676" stroke-width="1.5"/><path d="M1163.1 663.7 H1172.2" stroke="#767676" stroke-width="1.5"/><path d="M1178.2 663.7 H1200" stroke="#767676" stroke-width="1.5"/><rect x="291.0" y="661.7" width="4.2" height="4.2" fill="#000"/><rect x="321.2" y="661.7" width="4.2" height="4.2" fill="#000"/><rect x="358.9" y="661.7" width="4.2" height="4.2" fill="#000"/><rect x="381.5" y="661.7" width="4.2" height="4.2" fill="#000"/><rect x="426.7" y="661.7" width="4.2" height="4.2" fill="#000"/><rect x="434.3" y="661.7" width="4.2" height="4.2" fill="#000"/><rect x="464.4" y="661.7" width="4.2" height="4.2" fill="#000"/><rect x="494.6" y="661.7" width="4.2" height="4.2" fill="#000"/><rect x="524.7" y="661.7" width="4.2" height="4.2" fill="#000"/><rect x="554.9" y="661.7" width="4.2" height="4.2" fill="#000"/><rect x="585.1" y="661.7" width="4.2" height="4.2" fill="#000"/><rect x="615.2" y="661.7" width="4.2" height="4.2" fill="#000"/><rect x="645.4" y="661.7" width="4.2" height="4.2" fill="#000"/><rect x="675.5" y="661.7" width="4.2" height="4.2" fill="#000"/><rect x="705.7" y="661.7" width="4.2" height="4.2" fill="#000"/><rect x="713.2" y="661.7" width="4.2" height="4.2" fill="#000"/><rect x="728.3" y="661.7" width="4.2" height="4.2" fill="#000"/><rect x="750.9" y="661.7" width="4.2" height="4.2" fill="#000"/><rect x="773.6" y="661.7" width="4.2" height="4.2" fill="#000"/><rect x="796.2" y="661.7" width="4.2" height="4.2" fill="#000"/><rect x="811.3" y="661.7" width="4.2" height="4.2" fill="#000"/><rect x="826.3" y="661.7" width="4.2" height="4.2" fill="#000"/><rect x="849.0" y="661.7" width="4.2" height="4.2" fill="#000"/><rect x="864.0" y="661.7" width="4.2" height="4.2" fill="#000"/><rect x="879.1" y="661.7" width="4.2" height="4.2" fill="#000"/><rect x="894.2" y="661.7" width="4.2" height="4.2" fill="#000"/><rect x="909.3" y="661.7" width="4.2" height="4.2" fill="#000"/><rect x="916.8" y="661.7" width="4.2" height="4.2" fill="#000"/><rect x="939.4" y="661.7" width="4.2" height="4.2" fill="#000"/><rect x="962.1" y="661.7" width="4.2" height="4.2" fill="#000"/><rect x="969.6" y="661.7" width="4.2" height="4.2" fill="#000"/><rect x="992.2" y="661.7" width="4.2" height="4.2" fill="#000"/><rect x="1014.8" y="661.7" width="4.2" height="4.2" fill="#000"/><rect x="1029.9" y="661.7" width="4.2" height="4.2" fill="#000"/><rect x="1045.0" y="661.7" width="4.2" height="4.2" fill="#000"/><rect x="1060.1" y="661.7" width="4.2" height="4.2" fill="#000"/><rect x="1075.2" y="661.7" width="4.2" height="4.2" fill="#000"/><rect x="1082.7" y="661.7" width="4.2" height="4.2" fill="#000"/><rect x="1097.8" y="661.7" width="4.2" height="4.2" fill="#000"/><rect x="1105.3" y="661.7" width="4.2" height="4.2" fill="#000"/><rect x="1127.9" y="661.7" width="4.2" height="4.2" fill="#000"/><rect x="1143.0" y="661.7" width="4.2" height="4.2" fill="#000"/><rect x="1158.1" y="661.7" width="4.2" height="4.2" fill="#000"/><rect x="1173.2" y="661.7" width="4.2" height="4.2" fill="#000"/><path d="M296.0 681.5 H561.4" stroke="#767676" stroke-width="1.5"/><path d="M567.4 681.5 H591.6" stroke="#767676" stroke-width="1.5"/><path d="M597.6 681.5 H629.3" stroke="#767676" stroke-width="1.5"/><path d="M635.3 681.5 H667.0" stroke="#767676" stroke-width="1.5"/><path d="M673.0 681.5 H682.1" stroke="#767676" stroke-width="1.5"/><path d="M688.1 681.5 H697.2" stroke="#767676" stroke-width="1.5"/><path d="M703.2 681.5 H704.7" stroke="#767676" stroke-width="1.5"/><path d="M710.7 681.5 H719.8" stroke="#767676" stroke-width="1.5"/><path d="M725.8 681.5 H734.9" stroke="#767676" stroke-width="1.5"/><path d="M740.9 681.5 H757.5" stroke="#767676" stroke-width="1.5"/><path d="M763.5 681.5 H780.1" stroke="#767676" stroke-width="1.5"/><path d="M786.1 681.5 H795.2" stroke="#767676" stroke-width="1.5"/><path d="M801.2 681.5 H870.6" stroke="#767676" stroke-width="1.5"/><path d="M876.6 681.5 H878.1" stroke="#767676" stroke-width="1.5"/><path d="M884.1 681.5 H893.2" stroke="#767676" stroke-width="1.5"/><path d="M899.2 681.5 H908.3" stroke="#767676" stroke-width="1.5"/><path d="M914.3 681.5 H923.4" stroke="#767676" stroke-width="1.5"/><path d="M929.4 681.5 H953.5" stroke="#767676" stroke-width="1.5"/><path d="M959.5 681.5 H968.6" stroke="#767676" stroke-width="1.5"/><path d="M974.6 681.5 H983.7" stroke="#767676" stroke-width="1.5"/><path d="M989.7 681.5 H998.8" stroke="#767676" stroke-width="1.5"/><path d="M1004.8 681.5 H1044.0" stroke="#767676" stroke-width="1.5"/><path d="M1050.0 681.5 H1059.1" stroke="#767676" stroke-width="1.5"/><path d="M1065.1 681.5 H1074.2" stroke="#767676" stroke-width="1.5"/><path d="M1080.2 681.5 H1081.7" stroke="#767676" stroke-width="1.5"/><path d="M1087.7 681.5 H1111.9" stroke="#767676" stroke-width="1.5"/><path d="M1117.9 681.5 H1134.5" stroke="#767676" stroke-width="1.5"/><path d="M1140.5 681.5 H1157.1" stroke="#767676" stroke-width="1.5"/><path d="M1163.1 681.5 H1179.7" stroke="#767676" stroke-width="1.5"/><path d="M1185.7 681.5 H1200" stroke="#767676" stroke-width="1.5"/><rect x="291.0" y="679.5" width="4.2" height="4.2" fill="#000"/><rect x="562.4" y="679.5" width="4.2" height="4.2" fill="#000"/><rect x="592.6" y="679.5" width="4.2" height="4.2" fill="#000"/><rect x="630.3" y="679.5" width="4.2" height="4.2" fill="#000"/><rect x="668.0" y="679.5" width="4.2" height="4.2" fill="#000"/><rect x="683.1" y="679.5" width="4.2" height="4.2" fill="#000"/><rect x="698.2" y="679.5" width="4.2" height="4.2" fill="#000"/><rect x="705.7" y="679.5" width="4.2" height="4.2" fill="#000"/><rect x="720.8" y="679.5" width="4.2" height="4.2" fill="#000"/><rect x="735.9" y="679.5" width="4.2" height="4.2" fill="#000"/><rect x="758.5" y="679.5" width="4.2" height="4.2" fill="#000"/><rect x="781.1" y="679.5" width="4.2" height="4.2" fill="#000"/><rect x="796.2" y="679.5" width="4.2" height="4.2" fill="#000"/><rect x="871.6" y="679.5" width="4.2" height="4.2" fill="#000"/><rect x="879.1" y="679.5" width="4.2" height="4.2" fill="#000"/><rect x="894.2" y="679.5" width="4.2" height="4.2" fill="#000"/><rect x="909.3" y="679.5" width="4.2" height="4.2" fill="#000"/><rect x="924.4" y="679.5" width="4.2" height="4.2" fill="#000"/><rect x="954.5" y="679.5" width="4.2" height="4.2" fill="#000"/><rect x="969.6" y="679.5" width="4.2" height="4.2" fill="#000"/><rect x="984.7" y="679.5" width="4.2" height="4.2" fill="#000"/><rect x="999.8" y="679.5" width="4.2" height="4.2" fill="#000"/><rect x="1045.0" y="679.5" width="4.2" height="4.2" fill="#000"/><rect x="1060.1" y="679.5" width="4.2" height="4.2" fill="#000"/><rect x="1075.2" y="679.5" width="4.2" height="4.2" fill="#000"/><rect x="1082.7" y="679.5" width="4.2" height="4.2" fill="#000"/><rect x="1112.9" y="679.5" width="4.2" height="4.2" fill="#000"/><rect x="1135.5" y="679.5" width="4.2" height="4.2" fill="#000"/><rect x="1158.1" y="679.5" width="4.2" height="4.2" fill="#000"/><rect x="1180.7" y="679.5" width="4.2" height="4.2" fill="#000"/><rect x="644" y="691" width="248" height="17" fill="#dedede"/><path d="M644 707.5 H892 M644 691 V708 M891.5 691 V708" stroke="#b88a8a" stroke-width="1"/><path d="M748.5 691 V708" stroke="#c09090" stroke-width="1"/><path d="M643.6 705 V708" stroke="#c0a0a0" stroke-width=".8"/><path d="M651.2 705 V708" stroke="#c0a0a0" stroke-width=".8"/><path d="M658.7 705 V708" stroke="#c0a0a0" stroke-width=".8"/><path d="M666.2 705 V708" stroke="#c0a0a0" stroke-width=".8"/><path d="M673.8 705 V708" stroke="#c0a0a0" stroke-width=".8"/><path d="M681.3 705 V708" stroke="#c0a0a0" stroke-width=".8"/><path d="M688.9 705 V708" stroke="#c0a0a0" stroke-width=".8"/><path d="M696.4 705 V708" stroke="#c0a0a0" stroke-width=".8"/><path d="M703.9 705 V708" stroke="#c0a0a0" stroke-width=".8"/><path d="M711.5 705 V708" stroke="#c0a0a0" stroke-width=".8"/><path d="M719.0 705 V708" stroke="#c0a0a0" stroke-width=".8"/><path d="M726.5 705 V708" stroke="#c0a0a0" stroke-width=".8"/><path d="M734.1 705 V708" stroke="#c0a0a0" stroke-width=".8"/><path d="M741.6 705 V708" stroke="#c0a0a0" stroke-width=".8"/><path d="M749.2 705 V708" stroke="#c0a0a0" stroke-width=".8"/><path d="M756.7 705 V708" stroke="#c0a0a0" stroke-width=".8"/><path d="M764.2 705 V708" stroke="#c0a0a0" stroke-width=".8"/><path d="M771.8 705 V708" stroke="#c0a0a0" stroke-width=".8"/><path d="M779.3 705 V708" stroke="#c0a0a0" stroke-width=".8"/><path d="M786.9 705 V708" stroke="#c0a0a0" stroke-width=".8"/><path d="M794.4 705 V708" stroke="#c0a0a0" stroke-width=".8"/><path d="M802.0 705 V708" stroke="#c0a0a0" stroke-width=".8"/><path d="M809.5 705 V708" stroke="#c0a0a0" stroke-width=".8"/><path d="M817.0 705 V708" stroke="#c0a0a0" stroke-width=".8"/><path d="M824.6 705 V708" stroke="#c0a0a0" stroke-width=".8"/><path d="M832.1 705 V708" stroke="#c0a0a0" stroke-width=".8"/><path d="M839.6 705 V708" stroke="#c0a0a0" stroke-width=".8"/><path d="M847.2 705 V708" stroke="#c0a0a0" stroke-width=".8"/><path d="M854.7 705 V708" stroke="#c0a0a0" stroke-width=".8"/><path d="M862.3 705 V708" stroke="#c0a0a0" stroke-width=".8"/><path d="M869.8 705 V708" stroke="#c0a0a0" stroke-width=".8"/><path d="M877.4 705 V708" stroke="#c0a0a0" stroke-width=".8"/><path d="M884.9 705 V708" stroke="#c0a0a0" stroke-width=".8"/><path d="M892.4 705 V708" stroke="#c0a0a0" stroke-width=".8"/><rect x="289" y="709" width="911" height="7" fill="#dadada"/><rect x="289" y="716" width="911" height="11" fill="#f2f2f2"/><path d="M608.7 598 V716" stroke="#f05050" stroke-width="1.5"/><rect x="605" y="598" width="7" height="11" fill="#e82020"/><path d="M606 605 L606 619 L609 616 L612 621 L614 620 L612 615 L616 615Z" fill="#fff" stroke="#333" stroke-width="1"/><path d="M1189 608.5 L1192.5 605.5 V611.5Z M1201 608.5 L1197.5 605.5 V611.5Z" fill="#000"/><path d="M1191 608.5 H1199 M1195.2 602 V615" stroke="#000" stroke-width="1.3"/></svg>
<svg class="a" style="left:292px;top:717px;" width="12" height="10" viewBox="0 0 12 10"><circle cx="5" cy="5" r="3.5" fill="none" stroke="#444" stroke-width="1.5"/><path d="M8 8 L11 11" stroke="#444" stroke-width="2"/></svg>
<svg class="a" style="left:318px;top:718px;" width="46" height="9" viewBox="0 0 46 9"><path d="M1 8 H44 M4 2 V8" stroke="#666" stroke-width="1"/></svg>
<svg class="a" style="left:371px;top:720px;" width="4" height="6" viewBox="0 0 4 6"><path d="M4 0 V6 L0 3Z" fill="#555"/></svg>
<div class="a" style="left:384px;top:718px;width:167px;height:12px;background:linear-gradient(#fbfbfb,#dcdcdc);border:1px solid #bdbdbd;border-radius:3px"></div>
</body></html>
